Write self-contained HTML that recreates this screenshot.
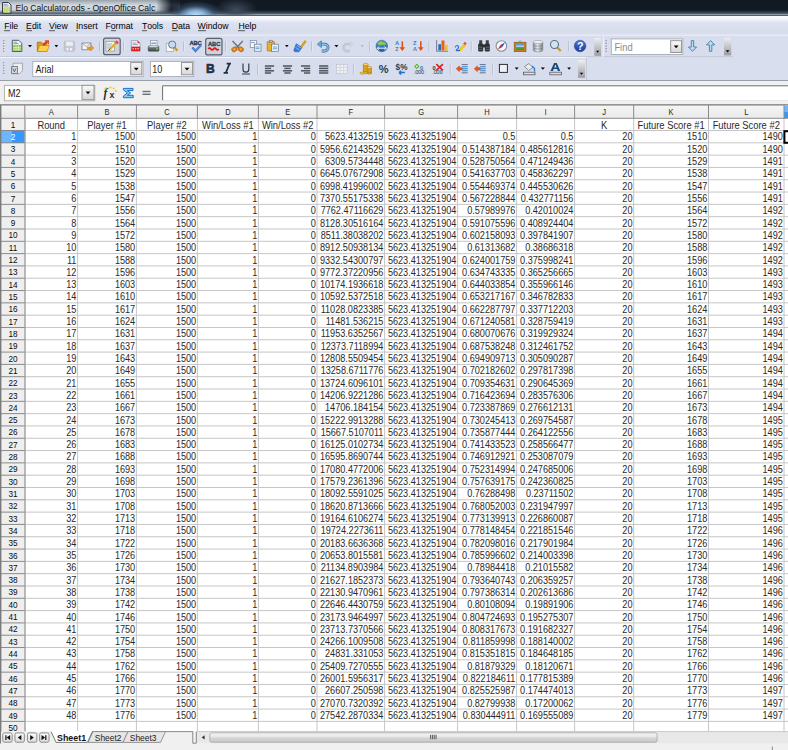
<!DOCTYPE html><html><head><meta charset="utf-8"><style>
*{box-sizing:border-box}
body{margin:0;width:788px;height:750px;overflow:hidden;position:relative;background:#f0f0f0;font-family:'Liberation Sans', sans-serif}
.a{position:absolute}
.t{position:absolute;white-space:nowrap;font-size:9.4px;line-height:12px;color:#2a2a2a;transform:scaleY(1.18);transform-origin:0 9px}
.r{text-align:right}
.c{text-align:center}
u{text-decoration:none;border-bottom:0.9px solid #666;display:inline-block;line-height:8.2px}

</style></head><body>
<div class="a" style="left:0;top:0;width:788px;height:16px;background:#111923"></div>
<div class="a" style="left:0;top:0;width:180px;height:15px;background:linear-gradient(90deg,rgba(205,213,221,1) 0,rgba(205,213,221,1) 156px,rgba(205,213,221,0.5) 163px,rgba(205,213,221,0) 171px)"></div>
<div class="a" style="left:0;top:0;width:180px;height:15px;background:linear-gradient(rgba(20,30,40,0.28),rgba(255,255,255,0.1) 35%,rgba(255,255,255,0.05) 60%,rgba(0,0,0,0.08))"></div>
<div class="a" style="left:0;top:9.5px;width:788px;height:6.5px;background:linear-gradient(rgba(18,26,36,0) 0,rgba(70,86,100,0.9) 55%,#8a98a4 75%,#3e4650 100%)"></div>
<div class="a" style="left:164px;top:0;width:64px;height:15px;background:radial-gradient(ellipse 28px 14px at 32px 15px,#bfe0fa 0,#8ab4d8 30%,rgba(70,100,130,0.55) 65%,rgba(18,26,36,0) 100%)"></div>
<div class="a" style="left:214px;top:0;width:44px;height:15px;background:radial-gradient(ellipse 22px 12px at 22px 10px,#3e4c5c 0,rgba(18,26,36,0) 100%)"></div>
<svg class="a" style="left:0;top:0" width="14" height="15"><path d="M2.5 2.5h6l2.5 2.5v8h-8.5z" fill="#e8ecef" stroke="#1e2c3a" stroke-width="0.9"/><rect x="3.6" y="7.5" width="6.4" height="5" fill="#b8d040"/><path d="M5.2 8v4.5M7 8v4.5M8.8 8v4.5" stroke="#f4f8e0" stroke-width="0.6"/><path d="M3.5 4.5h4M3.5 6h5" stroke="#7a8a9a" stroke-width="0.7"/></svg>
<div class="t" style="left:15.5px;top:1px;font-size:8.6px;line-height:14px;color:#101010;transform:scaleY(1.1);transform-origin:0 10px">Elo Calculator.ods - OpenOffice Calc</div>
<div class="a" style="left:0;top:16px;width:788px;height:19px;background:linear-gradient(#fbfcfe 0,#f4f6fb 15%,#dde2f0 36%,#d6dcec 85%,#e0e4f0 100%)"></div>
<div class="t" style="left:4.2px;top:20px;font-size:8.7px;line-height:12px;color:#000;transform:scaleY(1.1);transform-origin:0 9px"><u>F</u>ile</div>
<div class="t" style="left:26.1px;top:20px;font-size:8.7px;line-height:12px;color:#000;transform:scaleY(1.1);transform-origin:0 9px"><u>E</u>dit</div>
<div class="t" style="left:48.9px;top:20px;font-size:8.7px;line-height:12px;color:#000;transform:scaleY(1.1);transform-origin:0 9px"><u>V</u>iew</div>
<div class="t" style="left:75.9px;top:20px;font-size:8.7px;line-height:12px;color:#000;transform:scaleY(1.1);transform-origin:0 9px"><u>I</u>nsert</div>
<div class="t" style="left:105.4px;top:20px;font-size:8.7px;line-height:12px;color:#000;transform:scaleY(1.1);transform-origin:0 9px">F<u>o</u>rmat</div>
<div class="t" style="left:141.9px;top:20px;font-size:8.7px;line-height:12px;color:#000;transform:scaleY(1.1);transform-origin:0 9px"><u>T</u>ools</div>
<div class="t" style="left:171.7px;top:20px;font-size:8.7px;line-height:12px;color:#000;transform:scaleY(1.1);transform-origin:0 9px"><u>D</u>ata</div>
<div class="t" style="left:197.6px;top:20px;font-size:8.7px;line-height:12px;color:#000;transform:scaleY(1.1);transform-origin:0 9px"><u>W</u>indow</div>
<div class="t" style="left:238.4px;top:20px;font-size:8.7px;line-height:12px;color:#000;transform:scaleY(1.1);transform-origin:0 9px"><u>H</u>elp</div>
<div class="a" style="left:0;top:35px;width:788px;height:46px;background:#d8deee;border-top:1px solid #e9ebec"></div>
<div class="a" style="left:0;top:36px;width:602px;height:21px;background:#d7ddec;border-bottom:1px solid #c4cad8"></div>
<div class="a" style="left:603px;top:36px;width:130px;height:21px;background:#d7ddec;border-bottom:1px solid #c4cad8;border-left:1px solid #eef1f8"></div>
<div class="a" style="left:0;top:57px;width:587px;height:23px;background:#d7ddec;border-top:1px solid #f4f6fb;border-right:1px solid #c4cad8"></div>
<div class="a" style="left:0;top:80px;width:788px;height:1px;background:#9aa0a8"></div>
<div class="a" style="left:0;top:81px;width:788px;height:24px;background:#f0f0f0"></div>
<svg class="a" style="left:0;top:0" width="788" height="105"><defs>
<linearGradient id="chev" x1="0" y1="0" x2="0" y2="1"><stop offset="0" stop-color="#eceef2"/><stop offset="1" stop-color="#9a9ca0"/></linearGradient>
<linearGradient id="btn" x1="0" y1="0" x2="0" y2="1"><stop offset="0" stop-color="#fafafa"/><stop offset="1" stop-color="#d6d6d6"/></linearGradient>
<linearGradient id="prn" x1="0" y1="0" x2="0" y2="1"><stop offset="0" stop-color="#8a9096"/><stop offset="1" stop-color="#3e4348"/></linearGradient>
<linearGradient id="help" x1="0" y1="0" x2="0" y2="1"><stop offset="0" stop-color="#4a7ad8"/><stop offset="1" stop-color="#1a3a98"/></linearGradient>
<linearGradient id="db" x1="0" y1="0" x2="1" y2="0"><stop offset="0" stop-color="#8a8e94"/><stop offset="0.45" stop-color="#e8eaec"/><stop offset="1" stop-color="#7a7e84"/></linearGradient>
<linearGradient id="pic" x1="0" y1="0" x2="0" y2="1"><stop offset="0" stop-color="#4a90d8"/><stop offset="0.55" stop-color="#c8e0f0"/><stop offset="0.6" stop-color="#58a838"/><stop offset="1" stop-color="#3a8a28"/></linearGradient>
<linearGradient id="globe" x1="0" y1="0" x2="0" y2="1"><stop offset="0" stop-color="#58a0e0"/><stop offset="1" stop-color="#1a5aa8"/></linearGradient>
</defs><rect x="3.20" y="40.20" width="1.2" height="1.2" fill="#7a8494"/><rect x="4.20" y="41.20" width="0.8" height="0.8" fill="#fff" opacity="0.8"/><rect x="3.20" y="42.85" width="1.2" height="1.2" fill="#7a8494"/><rect x="4.20" y="43.85" width="0.8" height="0.8" fill="#fff" opacity="0.8"/><rect x="3.20" y="45.50" width="1.2" height="1.2" fill="#7a8494"/><rect x="4.20" y="46.50" width="0.8" height="0.8" fill="#fff" opacity="0.8"/><rect x="3.20" y="48.15" width="1.2" height="1.2" fill="#7a8494"/><rect x="4.20" y="49.15" width="0.8" height="0.8" fill="#fff" opacity="0.8"/><rect x="3.20" y="50.80" width="1.2" height="1.2" fill="#7a8494"/><rect x="4.20" y="51.80" width="0.8" height="0.8" fill="#fff" opacity="0.8"/><path d="M12.3 40.3h6.5l3 3v8.2h-9.5z" fill="#eef2f4" stroke="#3e4e5e" stroke-width="0.9"/><rect x="13.2" y="45" width="7.8" height="5.8" fill="#8cc43c"/><path d="M13.2 47.6h7.8M13.2 49.2h7.8M16 45v5.8M18.6 45v5.8" stroke="#eaf6d8" stroke-width="0.7"/><path d="M13.5 42.2h3.5M13.5 43.6h5" stroke="#6a8aa8" stroke-width="0.8"/><path d="M28.00 45.00L32.00 45.00L30.00 47.30Z" fill="#000"/><path d="M37.3 42.2h4l1 1.2h4.5v8h-9.5z" fill="#d89a18" stroke="#a86a08" stroke-width="0.7"/><path d="M37.5 51.5l2-6h9.8l-2.2 6z" fill="#ffd048" stroke="#c88a10" stroke-width="0.7"/><path d="M43.2 45.2l4-4" stroke="#d83818" stroke-width="2"/><path d="M44.5 40.2h4.5v4.5z" fill="#e84a20"/><path d="M54.50 45.08L58.20 45.08L56.35 47.22Z" fill="#000"/><rect x="64.2" y="41.2" width="10.4" height="10" rx="1.2" fill="#c6cad2" stroke="#b0b4bc" stroke-width="0.6"/><rect x="66" y="41.6" width="6.8" height="4.2" fill="#eceef2"/><rect x="66.5" y="48" width="2" height="2.5" fill="#eef0f2"/><rect x="70" y="48" width="2" height="2.5" fill="#eef0f2"/><rect x="82" y="43" width="9" height="6.8" fill="#f2f4f6" stroke="#7a8088" stroke-width="0.8"/><path d="M82.2 43.3l4.5 3.3 4.3-3.3" fill="none" stroke="#8a9098" stroke-width="0.7"/><path d="M87.5 47h3.2v-1.8l3.2 2.8-3.2 2.8v-1.8h-3.2z" fill="#f0a020" stroke="#c07810" stroke-width="0.5"/><line x1="99.5" x2="99.5" y1="41.5" y2="51.3" stroke="#b4bac8" stroke-width="1"/><line x1="100.3" x2="100.3" y1="41.5" y2="51.3" stroke="#f2f4fa" stroke-width="0.6"/><rect x="103.60" y="38.20" width="16.60" height="16.50" rx="2" fill="#cdd2de" stroke="#5a5f68" stroke-width="1.2"/><rect x="106" y="41.5" width="8.5" height="9.5" fill="#f6f8fa" stroke="#7a8490" stroke-width="0.6"/><path d="M107 44h5M107 46h4M107 48h5" stroke="#6aa0d8" stroke-width="0.8"/><path d="M109.5 49.5l7-7" stroke="#f0c020" stroke-width="2.6"/><path d="M109.5 49.5l7-7" stroke="#c89010" stroke-width="0.6"/><path d="M115.8 41.2l2.3 2.3" stroke="#e84060" stroke-width="2.4"/><path d="M108.4 50.8l1.5-2" stroke="#333" stroke-width="1"/><line x1="123.5" x2="123.5" y1="41.5" y2="51.3" stroke="#b4bac8" stroke-width="1"/><line x1="124.3" x2="124.3" y1="41.5" y2="51.3" stroke="#f2f4fa" stroke-width="0.6"/><path d="M131.3 40.6h6.2l2.6 2.6v7.9h-8.8z" fill="#f8f8f8" stroke="#8a9098" stroke-width="0.7"/><path d="M137.5 40.6l2.6 2.6h-2.6z" fill="#e02828"/><path d="M132.5 43h4M132.5 44.6h5.5" stroke="#5a8ac8" stroke-width="0.8"/><rect x="131.3" y="46.6" width="8.8" height="4.5" fill="#d82020"/><path d="M132.6 48.8h1.3M135 48.8h1.3M137.4 48.8h1.3" stroke="#fff" stroke-width="1"/><rect x="150.4" y="40.6" width="6.6" height="5.4" fill="#fafcfe" stroke="#8a98a8" stroke-width="0.7"/><rect x="151.3" y="42.4" width="4.8" height="1.8" fill="#7ab0e0"/><rect x="147.8" y="45.4" width="11.5" height="6.1" rx="1.5" fill="url(#prn)"/><rect x="149.5" y="46" width="8" height="1.2" fill="#d8dce0"/><rect x="156" y="48.2" width="2" height="1.4" fill="#6ad040"/><rect x="166.2" y="43.2" width="7.2" height="8.2" fill="#f8f8f8" stroke="#9aa0a8" stroke-width="0.7"/><path d="M174.4 47.2l3 3.6" stroke="#c89828" stroke-width="2.2"/><circle cx="172.2" cy="44.6" r="3.6" fill="#c4dcf0" stroke="#607080" stroke-width="0.9"/><line x1="183.6" x2="183.6" y1="41.5" y2="51.3" stroke="#b4bac8" stroke-width="1"/><line x1="184.4" x2="184.4" y1="41.5" y2="51.3" stroke="#f2f4fa" stroke-width="0.6"/><text x="189.4" y="44.8" font-family="Liberation Sans" font-weight="bold" font-size="5.8" fill="#24384a" stroke="#24384a" stroke-width="0.3" letter-spacing="-0.15">ABC</text><path d="M192.3 47.6l3.2 3.3 5.6-5.8" fill="none" stroke="#2a68c0" stroke-width="2.2"/><path d="M192.3 47.6l3.2 3.3 5.6-5.8" fill="none" stroke="#7ab8f0" stroke-width="0.8"/><rect x="205.70" y="38.30" width="16.30" height="16.60" rx="2" fill="#cdd2de" stroke="#5a5f68" stroke-width="1.2"/><text x="208" y="46.4" font-family="Liberation Sans" font-weight="bold" font-size="5.8" fill="#2a3e50" stroke="#2a3e50" stroke-width="0.3" letter-spacing="-0.1">ABC</text><path d="M208.3 49q1.3-1.8 2.6 0t2.6 0 2.6 0 2.6 0" fill="none" stroke="#e01818" stroke-width="1.9"/><line x1="225.5" x2="225.5" y1="41.5" y2="51.3" stroke="#b4bac8" stroke-width="1"/><line x1="226.3" x2="226.3" y1="41.5" y2="51.3" stroke="#f2f4fa" stroke-width="0.6"/><path d="M232.5 41l6.3 6.8M242.8 41l-6.3 6.8" stroke="#6a6e74" stroke-width="1.3"/><ellipse cx="234.4" cy="49.3" rx="2.8" ry="2.3" fill="#e08418" stroke="#a85c08" stroke-width="0.6" transform="rotate(-30 234.4 49.3)"/><ellipse cx="240.8" cy="49.3" rx="2.8" ry="2.3" fill="#e08418" stroke="#a85c08" stroke-width="0.6" transform="rotate(30 240.8 49.3)"/><circle cx="234.4" cy="49.3" r="0.8" fill="#f4c890"/><circle cx="240.8" cy="49.3" r="0.8" fill="#f4c890"/><rect x="250.2" y="40.4" width="6.4" height="7" fill="#f4f6f8" stroke="#7a8898" stroke-width="0.7"/><rect x="254.4" y="44.2" width="6.6" height="7" fill="#eef4fa" stroke="#6a7888" stroke-width="0.7"/><path d="M251.2 42.6h3.5M255.5 47h4M255.5 48.6h4" stroke="#4a8ad0" stroke-width="0.8"/><rect x="267.2" y="41.6" width="7.4" height="9.4" rx="0.8" fill="#e8b030" stroke="#a87410" stroke-width="0.7"/><rect x="269.3" y="40.2" width="3.2" height="2.2" fill="#b8bcc2" stroke="#6a6e74" stroke-width="0.5"/><rect x="271.6" y="44.2" width="7" height="7.1" fill="#eef4fa" stroke="#6a7888" stroke-width="0.7"/><path d="M272.8 47h4.5M272.8 48.8h4.5" stroke="#4a8ad0" stroke-width="0.8"/><path d="M285.00 45.10L288.60 45.10L286.80 47.20Z" fill="#000"/><path d="M301.5 46.5l4.3-5.8" stroke="#d8a020" stroke-width="2.4"/><path d="M296.2 43.8l5.8 3.6-3 4.4h-4.2l-1-1.6z" fill="#3a7ad8" stroke="#2a5aa8" stroke-width="0.6"/><path d="M295.5 47.5l4 2.3M297 45.5l4 2.3" stroke="#a8d0f8" stroke-width="0.7"/><line x1="311.6" x2="311.6" y1="41.5" y2="51.3" stroke="#b4bac8" stroke-width="1"/><line x1="312.4" x2="312.4" y1="41.5" y2="51.3" stroke="#f2f4fa" stroke-width="0.6"/><path d="M320.5 44.2h4.2a3.4 3.4 0 0 1 0 6.8h-3" fill="none" stroke="#3a6a98" stroke-width="2.8"/><path d="M320.5 44.2h4.2a3.4 3.4 0 0 1 0 6.8h-3" fill="none" stroke="#8ac0ec" stroke-width="1.4"/><path d="M317.2 44.2l4.2-3.4v6.8z" fill="#6aa8e0" stroke="#3a6a98" stroke-width="0.6"/><path d="M334.40 45.00L338.40 45.00L336.40 47.30Z" fill="#000"/><path d="M351 44.2h-4.2a3.4 3.4 0 0 0 0 6.8h3" fill="none" stroke="#c4c8d0" stroke-width="2.8"/><path d="M354.3 44.2l-4.2-3.4v6.8z" fill="#d0d4da"/><path d="M360.60 45.20L363.80 45.20L362.20 47.10Z" fill="#a8acb4"/><line x1="369.5" x2="369.5" y1="41.5" y2="51.3" stroke="#b4bac8" stroke-width="1"/><line x1="370.3" x2="370.3" y1="41.5" y2="51.3" stroke="#f2f4fa" stroke-width="0.6"/><circle cx="381.8" cy="46" r="5.8" fill="url(#globe)" stroke="#2a5a8a" stroke-width="0.5"/><path d="M377.5 43.5q2-2.5 4.5-1.5t3.5 1l-0.5 2-3-0.5-2 1z" fill="#9ad028"/><path d="M377.3 48.2h9M377.3 48.2l1.8-1.5M377.3 48.2l1.8 1.5M386.3 48.2l-1.8-1.5M386.3 48.2l-1.8 1.5" stroke="#f0f4f8" stroke-width="1"/><text x="395" y="45.4" font-family="Liberation Sans" font-weight="bold" font-size="5.8" fill="#2a80d8">A</text><text x="395.3" y="51.2" font-family="Liberation Sans" font-weight="bold" font-size="5.6" fill="#707478">Z</text><path d="M402.3 41.3v6.8" stroke="#e05018" stroke-width="1.6"/><path d="M399.5 47.2h5.6l-2.8 3.8z" fill="#e05018"/><text x="413" y="45.4" font-family="Liberation Sans" font-weight="bold" font-size="5.8" fill="#2a80d8">Z</text><text x="413" y="51.2" font-family="Liberation Sans" font-weight="bold" font-size="5.6" fill="#707478">A</text><path d="M420.8 41.3v6.8" stroke="#e05018" stroke-width="1.6"/><path d="M418 47.2h5.6l-2.8 3.8z" fill="#e05018"/><line x1="429.0" x2="429.0" y1="41.5" y2="51.3" stroke="#b4bac8" stroke-width="1"/><line x1="429.8" x2="429.8" y1="41.5" y2="51.3" stroke="#f2f4fa" stroke-width="0.6"/><path d="M436.6 40.2v11h11.4" fill="none" stroke="#6a7078" stroke-width="0.9"/><rect x="438.3" y="44.2" width="2.8" height="6.2" fill="#2a70b8"/><rect x="441.5" y="40.5" width="3" height="9.9" fill="#f06010"/><rect x="444.8" y="45" width="2.8" height="5.4" fill="#f0c020"/><path d="M455 47.5q1.5-3 3-1.5t-1 3.5 3.5 0.5" fill="none" stroke="#2a70d0" stroke-width="1.1"/><path d="M459.5 50.5l5.5-6" stroke="#f0c820" stroke-width="2.8"/><path d="M464.2 44.4l1.6-1.8" stroke="#e84a68" stroke-width="2.6"/><path d="M458.8 51.3l1-1.4" stroke="#444" stroke-width="1"/><line x1="471.3" x2="471.3" y1="41.5" y2="51.3" stroke="#b4bac8" stroke-width="1"/><line x1="472.1" x2="472.1" y1="41.5" y2="51.3" stroke="#f2f4fa" stroke-width="0.6"/><rect x="478.2" y="43.5" width="5" height="8" rx="1.2" fill="#2a2e33"/><rect x="484.8" y="43.5" width="5" height="8" rx="1.2" fill="#2a2e33"/><rect x="479.2" y="40.3" width="3" height="4" fill="#3a3e43"/><rect x="485.8" y="40.3" width="3" height="4" fill="#3a3e43"/><rect x="482.8" y="44.5" width="2.4" height="3" fill="#2a2e33"/><path d="M479 47.2h3.5M479 49.4h3.5M485.6 47.2h3.5M485.6 49.4h3.5" stroke="#8a9096" stroke-width="0.6"/><circle cx="501.4" cy="46" r="5.3" fill="#f8f8f8" stroke="#8a9098" stroke-width="1.1"/><path d="M505 42.4l-2.6 4.6-2-2z" fill="#2050d0"/><path d="M497.8 49.6l2.6-4.6 2 2z" fill="#e02020"/><path d="M518.5 42.2l1.6-1.8 1.6 1.8" fill="none" stroke="#8a8e94" stroke-width="0.7"/><rect x="514.2" y="42.2" width="11.8" height="9.5" fill="#c07e28" stroke="#8a5410" stroke-width="0.6"/><rect x="516.2" y="44" width="7.8" height="5.8" fill="url(#pic)"/><path d="M533.2 42v8.3a4.8 1.6 0 0 0 9.6 0V42z" fill="url(#db)" stroke="#7a7e84" stroke-width="0.5"/><ellipse cx="538" cy="42" rx="4.8" ry="1.6" fill="#eceef0" stroke="#8a8e94" stroke-width="0.5"/><path d="M533.3 45a4.8 1.4 0 0 0 9.5 0M533.3 47.8a4.8 1.4 0 0 0 9.5 0" fill="none" stroke="#6a6e74" stroke-width="0.5"/><path d="M557.2 47.4l3.5 3.6" stroke="#c89828" stroke-width="2.2"/><circle cx="554.5" cy="44.5" r="4" fill="#cfe4f4" stroke="#607080" stroke-width="1.1"/><line x1="568.5" x2="568.5" y1="41.5" y2="51.3" stroke="#b4bac8" stroke-width="1"/><line x1="569.3" x2="569.3" y1="41.5" y2="51.3" stroke="#f2f4fa" stroke-width="0.6"/><circle cx="580.1" cy="46" r="5.8" fill="url(#help)" stroke="#18348a" stroke-width="0.5"/><text x="580.2" y="50.2" text-anchor="middle" font-family="Liberation Sans" font-weight="bold" font-size="10.6" fill="#fff">?</text><rect x="594.30" y="38.00" width="6.70" height="17.80" fill="url(#chev)"/><path d="M596.10 50.82L599.20 50.82L597.65 52.68Z" fill="#000"/><rect x="605.60" y="40.20" width="1.2" height="1.2" fill="#7a8494"/><rect x="606.60" y="41.20" width="0.8" height="0.8" fill="#fff" opacity="0.8"/><rect x="605.60" y="42.85" width="1.2" height="1.2" fill="#7a8494"/><rect x="606.60" y="43.85" width="0.8" height="0.8" fill="#fff" opacity="0.8"/><rect x="605.60" y="45.50" width="1.2" height="1.2" fill="#7a8494"/><rect x="606.60" y="46.50" width="0.8" height="0.8" fill="#fff" opacity="0.8"/><rect x="605.60" y="48.15" width="1.2" height="1.2" fill="#7a8494"/><rect x="606.60" y="49.15" width="0.8" height="0.8" fill="#fff" opacity="0.8"/><rect x="605.60" y="50.80" width="1.2" height="1.2" fill="#7a8494"/><rect x="606.60" y="51.80" width="0.8" height="0.8" fill="#fff" opacity="0.8"/><rect x="611.3" y="38.9" width="71.5" height="15.6" fill="#fff" stroke="#a6acb6" stroke-width="0.9"/><rect x="670.70" y="40.70" width="10.90" height="11.80" fill="url(#btn)" stroke="#8c8c8c" stroke-width="0.9"/><path d="M673.75 45.60L678.55 45.60L676.15 48.30Z" fill="#000"/><path d="M691.3 40.6h2.4v6.4h2.9l-4.1 4.3-4.1-4.3h2.9z" fill="#b8dcf4" stroke="#4a7aa8" stroke-width="0.9" stroke-linejoin="round"/><path d="M709.4 51.3h2.4v-6.4h2.9l-4.1-4.3-4.1 4.3h2.9z" fill="#b8dcf4" stroke="#4a7aa8" stroke-width="0.9" stroke-linejoin="round"/><rect x="724.00" y="37.80" width="7.20" height="17.60" fill="url(#chev)"/><path d="M725.80 50.30L729.40 50.30L727.60 52.40Z" fill="#000"/><rect x="3.20" y="62.20" width="1.2" height="1.2" fill="#7a8494"/><rect x="4.20" y="63.20" width="0.8" height="0.8" fill="#fff" opacity="0.8"/><rect x="3.20" y="64.85" width="1.2" height="1.2" fill="#7a8494"/><rect x="4.20" y="65.85" width="0.8" height="0.8" fill="#fff" opacity="0.8"/><rect x="3.20" y="67.50" width="1.2" height="1.2" fill="#7a8494"/><rect x="4.20" y="68.50" width="0.8" height="0.8" fill="#fff" opacity="0.8"/><rect x="3.20" y="70.15" width="1.2" height="1.2" fill="#7a8494"/><rect x="4.20" y="71.15" width="0.8" height="0.8" fill="#fff" opacity="0.8"/><rect x="3.20" y="72.80" width="1.2" height="1.2" fill="#7a8494"/><rect x="4.20" y="73.80" width="0.8" height="0.8" fill="#fff" opacity="0.8"/><path d="M13 63.2h9.5v7.5l-3 3h-6.5z" fill="#eceef0" stroke="#8a9098" stroke-width="0.7"/><rect x="11.6" y="66.6" width="6" height="6.8" fill="#d4d8de" stroke="#6a7078" stroke-width="0.8"/><path d="M12.8 68.4l1.6 3.4 1.6-3.4" fill="none" stroke="#4a5058" stroke-width="0.8"/><rect x="32.8" y="61.4" width="110.3" height="15.2" fill="#fff" stroke="#a6acb6" stroke-width="0.9"/><rect x="130.70" y="62.60" width="11.10" height="12.20" fill="url(#btn)" stroke="#8c8c8c" stroke-width="0.9"/><path d="M133.85 67.70L138.65 67.70L136.25 70.40Z" fill="#000"/><rect x="150.4" y="61.4" width="43.4" height="15.2" fill="#fff" stroke="#a6acb6" stroke-width="0.9"/><rect x="181.40" y="62.60" width="11.20" height="12.20" fill="url(#btn)" stroke="#8c8c8c" stroke-width="0.9"/><path d="M184.60 67.70L189.40 67.70L187.00 70.40Z" fill="#000"/><text x="205.9" y="72.9" font-family="Liberation Sans" font-weight="bold" font-size="12" fill="#1e3244" stroke="#1e3244" stroke-width="0.6">B</text><path d="M226.6 63.6h4.4M223.6 72.9h4.4M229.6 63.6l-3.8 9.3" stroke="#1e3244" stroke-width="1.7" fill="none"/><path d="M243 63.6v5.6a2.9 2.9 0 0 0 5.8 0v-5.6" fill="none" stroke="#2a3e50" stroke-width="1.2"/><path d="M242 74h8" stroke="#2a3e50" stroke-width="1"/><line x1="257.6" x2="257.6" y1="63.5" y2="74.5" stroke="#b4bac8" stroke-width="1"/><line x1="258.4" x2="258.4" y1="63.5" y2="74.5" stroke="#f2f4fa" stroke-width="0.6"/><rect x="264.90" y="65.25" width="9.20" height="1.5" fill="#4e545c"/><rect x="264.90" y="67.65" width="6.20" height="1.5" fill="#4e545c"/><rect x="264.90" y="70.05" width="9.20" height="1.5" fill="#4e545c"/><rect x="264.90" y="72.25" width="6.20" height="1.5" fill="#4e545c"/><rect x="282.90" y="65.25" width="9.20" height="1.5" fill="#4e545c"/><rect x="284.40" y="67.65" width="6.20" height="1.5" fill="#4e545c"/><rect x="282.90" y="70.05" width="9.20" height="1.5" fill="#4e545c"/><rect x="284.40" y="72.25" width="6.20" height="1.5" fill="#4e545c"/><rect x="301.00" y="65.25" width="9.20" height="1.5" fill="#4e545c"/><rect x="304.00" y="67.65" width="6.20" height="1.5" fill="#4e545c"/><rect x="301.00" y="70.05" width="9.20" height="1.5" fill="#4e545c"/><rect x="304.00" y="72.25" width="6.20" height="1.5" fill="#4e545c"/><rect x="319.10" y="65.25" width="9.20" height="1.5" fill="#4e545c"/><rect x="319.10" y="67.65" width="9.20" height="1.5" fill="#4e545c"/><rect x="319.10" y="70.05" width="9.20" height="1.5" fill="#4e545c"/><rect x="319.10" y="72.25" width="9.20" height="1.5" fill="#4e545c"/><rect x="336.5" y="64.5" width="10.8" height="9" fill="#eef0f4" stroke="#c0c4cc" stroke-width="0.7"/><path d="M336.5 67.5h10.8M336.5 70.5h10.8M340.1 64.5v9M343.7 64.5v9" stroke="#c8ccd4" stroke-width="0.6"/><line x1="353.4" x2="353.4" y1="63.5" y2="74.5" stroke="#b4bac8" stroke-width="1"/><line x1="354.2" x2="354.2" y1="63.5" y2="74.5" stroke="#f2f4fa" stroke-width="0.6"/><rect x="363.20" y="64.40" width="4.80" height="8.20" fill="#e8b028" stroke="#a87410" stroke-width="0.5"/><ellipse cx="365.60" cy="72.60" rx="2.40" ry="1.10" fill="#e8b028" stroke="#a87410" stroke-width="0.5"/><path d="M363.20 66.00q2.40 1.76 4.80 0" fill="none" stroke="#b07c14" stroke-width="0.5"/><path d="M363.20 67.60q2.40 1.76 4.80 0" fill="none" stroke="#b07c14" stroke-width="0.5"/><path d="M363.20 69.20q2.40 1.76 4.80 0" fill="none" stroke="#b07c14" stroke-width="0.5"/><path d="M363.20 70.80q2.40 1.76 4.80 0" fill="none" stroke="#b07c14" stroke-width="0.5"/><ellipse cx="365.60" cy="64.40" rx="2.40" ry="1.10" fill="#f8dc70" stroke="#a87410" stroke-width="0.5"/><rect x="367.20" y="67.40" width="4.40" height="5.80" fill="#e8b028" stroke="#a87410" stroke-width="0.5"/><ellipse cx="369.40" cy="73.20" rx="2.20" ry="1.00" fill="#e8b028" stroke="#a87410" stroke-width="0.5"/><path d="M367.20 69.00q2.20 1.60 4.40 0" fill="none" stroke="#b07c14" stroke-width="0.5"/><path d="M367.20 70.60q2.20 1.60 4.40 0" fill="none" stroke="#b07c14" stroke-width="0.5"/><path d="M367.20 72.20q2.20 1.60 4.40 0" fill="none" stroke="#b07c14" stroke-width="0.5"/><ellipse cx="369.40" cy="67.40" rx="2.20" ry="1.00" fill="#f8dc70" stroke="#a87410" stroke-width="0.5"/><ellipse cx="362.4" cy="73.2" rx="2.4" ry="1.1" fill="#f0c848" stroke="#a87410" stroke-width="0.5"/><text x="378.8" y="73.2" font-family="Liberation Sans" font-weight="bold" font-size="11" fill="#2a3a4a">%</text><text x="395.6" y="70.4" font-family="Liberation Sans" font-weight="bold" font-size="8.2" fill="#2a3a4a" letter-spacing="0.2">$%</text><path d="M399 72.6h6M399 72.6l2.2-1.8M399 72.6l2.2 1.8" stroke="#2a70c8" stroke-width="1.5" fill="none"/><path d="M416.8 63.8l2.6 2.6-2.6 2.6-2.6-2.6z" fill="#3aa818"/><path d="M416.8 65.1v2.6M415.5 66.4h2.6" stroke="#fff" stroke-width="0.7"/><text x="420" y="69.6" font-family="Liberation Sans" font-weight="bold" font-size="5.6" fill="#2a70d0">0</text><text x="413.8" y="74" font-family="Liberation Sans" font-size="5.6" fill="#2a3a4a" letter-spacing="-0.2">.000</text><text x="432.5" y="69.6" font-family="Liberation Sans" font-weight="bold" font-size="5.6" fill="#2a3a4a">0</text><text x="432.3" y="74" font-family="Liberation Sans" font-size="5.6" fill="#2a3a4a" letter-spacing="-0.2">.00</text><text x="439.6" y="74" font-family="Liberation Sans" font-weight="bold" font-size="5.6" fill="#2a70d0">0</text><path d="M436.3 64.2l6.6 6.2M442.9 64.2l-6.6 6.2" stroke="#e02020" stroke-width="1.6"/><line x1="450.3" x2="450.3" y1="63.5" y2="74.5" stroke="#b4bac8" stroke-width="1"/><line x1="451.1" x2="451.1" y1="63.5" y2="74.5" stroke="#f2f4fa" stroke-width="0.6"/><path d="M461.70 64.6h6M461.70 72.8h6" stroke="#4e545c" stroke-width="0.8"/><path d="M462.20 66.8h5.5M462.20 68.8h5.5M462.20 70.8h5.5" stroke="#2a80d8" stroke-width="1.1"/><path d="M456.20 68.8l3.2-3v1.8h2.8v2.4h-2.8v1.8z" fill="#e8581c" stroke="#b84010" stroke-width="0.4"/><path d="M479.70 64.6h6M479.70 72.8h6" stroke="#4e545c" stroke-width="0.8"/><path d="M480.20 66.8h5.5M480.20 68.8h5.5M480.20 70.8h5.5" stroke="#2a80d8" stroke-width="1.1"/><path d="M474.20 68.8l3.2-3v1.8h2.8v2.4h-2.8v1.8z" fill="#e8581c" stroke="#b84010" stroke-width="0.4"/><line x1="492.6" x2="492.6" y1="63.5" y2="74.5" stroke="#b4bac8" stroke-width="1"/><line x1="493.4" x2="493.4" y1="63.5" y2="74.5" stroke="#f2f4fa" stroke-width="0.6"/><rect x="499.4" y="64.4" width="8" height="8" fill="#eef0f4" stroke="#2a2e34" stroke-width="1"/><path d="M514.80 67.45L518.60 67.45L516.70 69.65Z" fill="#000"/><path d="M524.5 66.5l4.5-3 4 4-4.5 3z" fill="#e8eaec" stroke="#6a6e74" stroke-width="0.7"/><path d="M532 66l2.5 2.5v3" fill="none" stroke="#2a80d8" stroke-width="1.4"/><rect x="523.4" y="72.2" width="11.6" height="2.6" fill="#dcdcdc" stroke="#5a5e64" stroke-width="0.8"/><path d="M540.80 67.38L544.90 67.38L542.85 69.73Z" fill="#000"/><path d="M550.5 71l3.6-8h2.6l3.6 8h-2.4l-0.8-2h-3.4l-0.8 2z" fill="#1a4a78"/><path d="M554.2 67.4h2.4l-1.2-2.8z" fill="#dde2f0"/><rect x="549.8" y="72.2" width="11.6" height="2.6" fill="#dcdcdc" stroke="#5a5e64" stroke-width="0.8"/><path d="M567.20 67.45L571.00 67.45L569.10 69.65Z" fill="#000"/><rect x="577.90" y="60.00" width="7.10" height="17.80" fill="url(#chev)"/><path d="M579.70 72.72L583.20 72.72L581.45 74.78Z" fill="#000"/><rect x="4.4" y="85.4" width="90.4" height="15.4" fill="#fff" stroke="#acacac" stroke-width="0.9"/><rect x="82.00" y="85.30" width="12.00" height="14.40" fill="url(#btn)" stroke="#8c8c8c" stroke-width="0.9"/><path d="M85.60 91.50L90.40 91.50L88.00 94.20Z" fill="#000"/><text x="103.6" y="97" font-family="Liberation Serif" font-style="italic" font-weight="bold" font-size="11.5" fill="#24323e">f</text><text x="109.4" y="98.2" font-family="Liberation Sans" font-weight="bold" font-size="8.8" fill="#24323e">x</text><circle cx="105.6" cy="88.6" r="1.1" fill="#f4c020"/><circle cx="110.4" cy="87.4" r="1" fill="#f4c020"/><circle cx="113.6" cy="88.4" r="0.9" fill="#f4c020"/><circle cx="115.8" cy="91" r="0.9" fill="#f4c020"/><circle cx="107.8" cy="87.6" r="0.7" fill="#f8d860"/><path d="M123.4 88.4h9.6v2.2h-5.6l3.2 2.3-3.2 2.4h5.8v2.4h-9.8v-1.6l4-3.2-4-3z" fill="#8ccaf0" stroke="#1a70c8" stroke-width="1"/><rect x="142.5" y="90.8" width="8" height="1.4" fill="#6a6e74"/><rect x="142.5" y="93.6" width="8" height="1.4" fill="#6a6e74"/><rect x="162.2" y="85.4" width="640" height="15" fill="#fff"/><path d="M162.6 100.4V85.8H800" fill="none" stroke="#6c6c6c" stroke-width="1"/><path d="M162.6 100.6H800" stroke="#e6e6e6" stroke-width="0.9"/></svg>
<div class="t" style="left:35.4px;top:64.1px;font-size:9px;color:#1a1a1a;transform:scaleY(1.12)">Arial</div>
<div class="t" style="left:152.3px;top:64.1px;font-size:9px;color:#1a1a1a;transform:scaleY(1.12)">10</div>
<div class="t" style="left:614.4px;top:42.2px;font-size:9.4px;color:#8a8a8a">Find</div>
<div class="t" style="left:8px;top:88.2px;font-size:9px;color:#1a1a1a;transform:scaleY(1.12)">M2</div>
<div class="a" style="left:0;top:104.5px;width:788px;height:627px;background:#fff"></div>
<div class="a" style="left:1px;top:105px;width:788px;height:13px;background:linear-gradient(#f6f6f6,#e9e9e9)"></div>
<div class="a" style="left:1px;top:118px;width:24px;height:614px;background:#efefef"></div>
<div class="a" style="left:1.2px;top:130.3px;width:23.6px;height:12.6px;background:linear-gradient(90deg,#6cb5ff 0,#6cb5ff 11px,#3399ff 11.5px)"></div>
<div class="a" style="left:784px;top:105.5px;width:10px;height:12.8px;background:linear-gradient(#70b8ff 0,#70b8ff 6px,#3399ff 6.5px)"></div>
<svg class="a" style="left:0;top:0" width="788" height="750"><line x1="25" x2="788" y1="130.51" y2="130.51" stroke="#c6c6c6" stroke-width="1"/><line x1="25" x2="788" y1="142.82" y2="142.82" stroke="#c6c6c6" stroke-width="1"/><line x1="25" x2="788" y1="155.13" y2="155.13" stroke="#c6c6c6" stroke-width="1"/><line x1="25" x2="788" y1="167.44" y2="167.44" stroke="#c6c6c6" stroke-width="1"/><line x1="25" x2="788" y1="179.75" y2="179.75" stroke="#c6c6c6" stroke-width="1"/><line x1="25" x2="788" y1="192.06" y2="192.06" stroke="#c6c6c6" stroke-width="1"/><line x1="25" x2="788" y1="204.37" y2="204.37" stroke="#c6c6c6" stroke-width="1"/><line x1="25" x2="788" y1="216.68" y2="216.68" stroke="#c6c6c6" stroke-width="1"/><line x1="25" x2="788" y1="228.99" y2="228.99" stroke="#c6c6c6" stroke-width="1"/><line x1="25" x2="788" y1="241.30" y2="241.30" stroke="#c6c6c6" stroke-width="1"/><line x1="25" x2="788" y1="253.61" y2="253.61" stroke="#c6c6c6" stroke-width="1"/><line x1="25" x2="788" y1="265.92" y2="265.92" stroke="#c6c6c6" stroke-width="1"/><line x1="25" x2="788" y1="278.23" y2="278.23" stroke="#c6c6c6" stroke-width="1"/><line x1="25" x2="788" y1="290.54" y2="290.54" stroke="#c6c6c6" stroke-width="1"/><line x1="25" x2="788" y1="302.85" y2="302.85" stroke="#c6c6c6" stroke-width="1"/><line x1="25" x2="788" y1="315.16" y2="315.16" stroke="#c6c6c6" stroke-width="1"/><line x1="25" x2="788" y1="327.47" y2="327.47" stroke="#c6c6c6" stroke-width="1"/><line x1="25" x2="788" y1="339.78" y2="339.78" stroke="#c6c6c6" stroke-width="1"/><line x1="25" x2="788" y1="352.09" y2="352.09" stroke="#c6c6c6" stroke-width="1"/><line x1="25" x2="788" y1="364.40" y2="364.40" stroke="#c6c6c6" stroke-width="1"/><line x1="25" x2="788" y1="376.71" y2="376.71" stroke="#c6c6c6" stroke-width="1"/><line x1="25" x2="788" y1="389.02" y2="389.02" stroke="#c6c6c6" stroke-width="1"/><line x1="25" x2="788" y1="401.33" y2="401.33" stroke="#c6c6c6" stroke-width="1"/><line x1="25" x2="788" y1="413.64" y2="413.64" stroke="#c6c6c6" stroke-width="1"/><line x1="25" x2="788" y1="425.95" y2="425.95" stroke="#c6c6c6" stroke-width="1"/><line x1="25" x2="788" y1="438.26" y2="438.26" stroke="#c6c6c6" stroke-width="1"/><line x1="25" x2="788" y1="450.57" y2="450.57" stroke="#c6c6c6" stroke-width="1"/><line x1="25" x2="788" y1="462.88" y2="462.88" stroke="#c6c6c6" stroke-width="1"/><line x1="25" x2="788" y1="475.19" y2="475.19" stroke="#c6c6c6" stroke-width="1"/><line x1="25" x2="788" y1="487.50" y2="487.50" stroke="#c6c6c6" stroke-width="1"/><line x1="25" x2="788" y1="499.81" y2="499.81" stroke="#c6c6c6" stroke-width="1"/><line x1="25" x2="788" y1="512.12" y2="512.12" stroke="#c6c6c6" stroke-width="1"/><line x1="25" x2="788" y1="524.43" y2="524.43" stroke="#c6c6c6" stroke-width="1"/><line x1="25" x2="788" y1="536.74" y2="536.74" stroke="#c6c6c6" stroke-width="1"/><line x1="25" x2="788" y1="549.05" y2="549.05" stroke="#c6c6c6" stroke-width="1"/><line x1="25" x2="788" y1="561.36" y2="561.36" stroke="#c6c6c6" stroke-width="1"/><line x1="25" x2="788" y1="573.67" y2="573.67" stroke="#c6c6c6" stroke-width="1"/><line x1="25" x2="788" y1="585.98" y2="585.98" stroke="#c6c6c6" stroke-width="1"/><line x1="25" x2="788" y1="598.29" y2="598.29" stroke="#c6c6c6" stroke-width="1"/><line x1="25" x2="788" y1="610.60" y2="610.60" stroke="#c6c6c6" stroke-width="1"/><line x1="25" x2="788" y1="622.91" y2="622.91" stroke="#c6c6c6" stroke-width="1"/><line x1="25" x2="788" y1="635.22" y2="635.22" stroke="#c6c6c6" stroke-width="1"/><line x1="25" x2="788" y1="647.53" y2="647.53" stroke="#c6c6c6" stroke-width="1"/><line x1="25" x2="788" y1="659.84" y2="659.84" stroke="#c6c6c6" stroke-width="1"/><line x1="25" x2="788" y1="672.15" y2="672.15" stroke="#c6c6c6" stroke-width="1"/><line x1="25" x2="788" y1="684.46" y2="684.46" stroke="#c6c6c6" stroke-width="1"/><line x1="25" x2="788" y1="696.77" y2="696.77" stroke="#c6c6c6" stroke-width="1"/><line x1="25" x2="788" y1="709.08" y2="709.08" stroke="#c6c6c6" stroke-width="1"/><line x1="25" x2="788" y1="721.39" y2="721.39" stroke="#c6c6c6" stroke-width="1"/><line x1="25" x2="788" y1="733.70" y2="733.70" stroke="#c6c6c6" stroke-width="1"/><line x1="77.60" x2="77.60" y1="118" y2="731" stroke="#c6c6c6" stroke-width="1"/><line x1="136.40" x2="136.40" y1="118" y2="731" stroke="#c6c6c6" stroke-width="1"/><line x1="197.40" x2="197.40" y1="118" y2="731" stroke="#c6c6c6" stroke-width="1"/><line x1="258.40" x2="258.40" y1="118" y2="731" stroke="#c6c6c6" stroke-width="1"/><line x1="317.00" x2="317.00" y1="118" y2="731" stroke="#c6c6c6" stroke-width="1"/><line x1="384.60" x2="384.60" y1="118" y2="731" stroke="#c6c6c6" stroke-width="1"/><line x1="457.60" x2="457.60" y1="118" y2="731" stroke="#c6c6c6" stroke-width="1"/><line x1="516.60" x2="516.60" y1="118" y2="731" stroke="#c6c6c6" stroke-width="1"/><line x1="574.60" x2="574.60" y1="118" y2="731" stroke="#c6c6c6" stroke-width="1"/><line x1="633.70" x2="633.70" y1="118" y2="731" stroke="#c6c6c6" stroke-width="1"/><line x1="708.50" x2="708.50" y1="118" y2="731" stroke="#c6c6c6" stroke-width="1"/><line x1="784.00" x2="784.00" y1="118" y2="731" stroke="#c6c6c6" stroke-width="1"/><line x1="0" x2="788" y1="104.9" y2="104.9" stroke="#767676" stroke-width="1.1"/><line x1="0" x2="788" y1="118.3" y2="118.3" stroke="#8a8a8a"/><line x1="24.80" x2="24.80" y1="105" y2="118.3" stroke="#8a8a8a"/><line x1="77.60" x2="77.60" y1="105" y2="118.3" stroke="#8a8a8a"/><line x1="136.40" x2="136.40" y1="105" y2="118.3" stroke="#8a8a8a"/><line x1="197.40" x2="197.40" y1="105" y2="118.3" stroke="#8a8a8a"/><line x1="258.40" x2="258.40" y1="105" y2="118.3" stroke="#8a8a8a"/><line x1="317.00" x2="317.00" y1="105" y2="118.3" stroke="#8a8a8a"/><line x1="384.60" x2="384.60" y1="105" y2="118.3" stroke="#8a8a8a"/><line x1="457.60" x2="457.60" y1="105" y2="118.3" stroke="#8a8a8a"/><line x1="516.60" x2="516.60" y1="105" y2="118.3" stroke="#8a8a8a"/><line x1="574.60" x2="574.60" y1="105" y2="118.3" stroke="#8a8a8a"/><line x1="633.70" x2="633.70" y1="105" y2="118.3" stroke="#8a8a8a"/><line x1="708.50" x2="708.50" y1="105" y2="118.3" stroke="#8a8a8a"/><line x1="784.00" x2="784.00" y1="105" y2="118.3" stroke="#8a8a8a"/><line x1="25.0" x2="25.0" y1="118" y2="731.5" stroke="#a4a4a4" stroke-width="1.5"/><line x1="0" x2="24.8" y1="130.51" y2="130.51" stroke="#8a8a8a"/><line x1="0" x2="24.8" y1="142.82" y2="142.82" stroke="#8a8a8a"/><line x1="0" x2="24.8" y1="155.13" y2="155.13" stroke="#8a8a8a"/><line x1="0" x2="24.8" y1="167.44" y2="167.44" stroke="#8a8a8a"/><line x1="0" x2="24.8" y1="179.75" y2="179.75" stroke="#8a8a8a"/><line x1="0" x2="24.8" y1="192.06" y2="192.06" stroke="#8a8a8a"/><line x1="0" x2="24.8" y1="204.37" y2="204.37" stroke="#8a8a8a"/><line x1="0" x2="24.8" y1="216.68" y2="216.68" stroke="#8a8a8a"/><line x1="0" x2="24.8" y1="228.99" y2="228.99" stroke="#8a8a8a"/><line x1="0" x2="24.8" y1="241.30" y2="241.30" stroke="#8a8a8a"/><line x1="0" x2="24.8" y1="253.61" y2="253.61" stroke="#8a8a8a"/><line x1="0" x2="24.8" y1="265.92" y2="265.92" stroke="#8a8a8a"/><line x1="0" x2="24.8" y1="278.23" y2="278.23" stroke="#8a8a8a"/><line x1="0" x2="24.8" y1="290.54" y2="290.54" stroke="#8a8a8a"/><line x1="0" x2="24.8" y1="302.85" y2="302.85" stroke="#8a8a8a"/><line x1="0" x2="24.8" y1="315.16" y2="315.16" stroke="#8a8a8a"/><line x1="0" x2="24.8" y1="327.47" y2="327.47" stroke="#8a8a8a"/><line x1="0" x2="24.8" y1="339.78" y2="339.78" stroke="#8a8a8a"/><line x1="0" x2="24.8" y1="352.09" y2="352.09" stroke="#8a8a8a"/><line x1="0" x2="24.8" y1="364.40" y2="364.40" stroke="#8a8a8a"/><line x1="0" x2="24.8" y1="376.71" y2="376.71" stroke="#8a8a8a"/><line x1="0" x2="24.8" y1="389.02" y2="389.02" stroke="#8a8a8a"/><line x1="0" x2="24.8" y1="401.33" y2="401.33" stroke="#8a8a8a"/><line x1="0" x2="24.8" y1="413.64" y2="413.64" stroke="#8a8a8a"/><line x1="0" x2="24.8" y1="425.95" y2="425.95" stroke="#8a8a8a"/><line x1="0" x2="24.8" y1="438.26" y2="438.26" stroke="#8a8a8a"/><line x1="0" x2="24.8" y1="450.57" y2="450.57" stroke="#8a8a8a"/><line x1="0" x2="24.8" y1="462.88" y2="462.88" stroke="#8a8a8a"/><line x1="0" x2="24.8" y1="475.19" y2="475.19" stroke="#8a8a8a"/><line x1="0" x2="24.8" y1="487.50" y2="487.50" stroke="#8a8a8a"/><line x1="0" x2="24.8" y1="499.81" y2="499.81" stroke="#8a8a8a"/><line x1="0" x2="24.8" y1="512.12" y2="512.12" stroke="#8a8a8a"/><line x1="0" x2="24.8" y1="524.43" y2="524.43" stroke="#8a8a8a"/><line x1="0" x2="24.8" y1="536.74" y2="536.74" stroke="#8a8a8a"/><line x1="0" x2="24.8" y1="549.05" y2="549.05" stroke="#8a8a8a"/><line x1="0" x2="24.8" y1="561.36" y2="561.36" stroke="#8a8a8a"/><line x1="0" x2="24.8" y1="573.67" y2="573.67" stroke="#8a8a8a"/><line x1="0" x2="24.8" y1="585.98" y2="585.98" stroke="#8a8a8a"/><line x1="0" x2="24.8" y1="598.29" y2="598.29" stroke="#8a8a8a"/><line x1="0" x2="24.8" y1="610.60" y2="610.60" stroke="#8a8a8a"/><line x1="0" x2="24.8" y1="622.91" y2="622.91" stroke="#8a8a8a"/><line x1="0" x2="24.8" y1="635.22" y2="635.22" stroke="#8a8a8a"/><line x1="0" x2="24.8" y1="647.53" y2="647.53" stroke="#8a8a8a"/><line x1="0" x2="24.8" y1="659.84" y2="659.84" stroke="#8a8a8a"/><line x1="0" x2="24.8" y1="672.15" y2="672.15" stroke="#8a8a8a"/><line x1="0" x2="24.8" y1="684.46" y2="684.46" stroke="#8a8a8a"/><line x1="0" x2="24.8" y1="696.77" y2="696.77" stroke="#8a8a8a"/><line x1="0" x2="24.8" y1="709.08" y2="709.08" stroke="#8a8a8a"/><line x1="0" x2="24.8" y1="721.39" y2="721.39" stroke="#8a8a8a"/><line x1="0" x2="24.8" y1="733.70" y2="733.70" stroke="#8a8a8a"/><line x1="0.7" x2="0.7" y1="105" y2="744" stroke="#7a7a7a" stroke-width="1.4"/><rect x="784.4" y="131.2" width="10" height="11.6" fill="none" stroke="#000" stroke-width="2"/></svg>
<div class="t c" style="left:24.80px;top:107px;width:52.80px;font-size:7.6px;transform:scaleY(1.25);transform-origin:50% 9px">A</div>
<div class="t c" style="left:77.60px;top:107px;width:58.80px;font-size:7.6px;transform:scaleY(1.25);transform-origin:50% 9px">B</div>
<div class="t c" style="left:136.40px;top:107px;width:61.00px;font-size:7.6px;transform:scaleY(1.25);transform-origin:50% 9px">C</div>
<div class="t c" style="left:197.40px;top:107px;width:61.00px;font-size:7.6px;transform:scaleY(1.25);transform-origin:50% 9px">D</div>
<div class="t c" style="left:258.40px;top:107px;width:58.60px;font-size:7.6px;transform:scaleY(1.25);transform-origin:50% 9px">E</div>
<div class="t c" style="left:317.00px;top:107px;width:67.60px;font-size:7.6px;transform:scaleY(1.25);transform-origin:50% 9px">F</div>
<div class="t c" style="left:384.60px;top:107px;width:73.00px;font-size:7.6px;transform:scaleY(1.25);transform-origin:50% 9px">G</div>
<div class="t c" style="left:457.60px;top:107px;width:59.00px;font-size:7.6px;transform:scaleY(1.25);transform-origin:50% 9px">H</div>
<div class="t c" style="left:516.60px;top:107px;width:58.00px;font-size:7.6px;transform:scaleY(1.25);transform-origin:50% 9px">I</div>
<div class="t c" style="left:574.60px;top:107px;width:59.10px;font-size:7.6px;transform:scaleY(1.25);transform-origin:50% 9px">J</div>
<div class="t c" style="left:633.70px;top:107px;width:74.80px;font-size:7.6px;transform:scaleY(1.25);transform-origin:50% 9px">K</div>
<div class="t c" style="left:708.50px;top:107px;width:75.50px;font-size:7.6px;transform:scaleY(1.25);transform-origin:50% 9px">L</div>
<div class="t c" style="left:784px;top:107px;width:30px;font-size:7.6px;color:#fff;transform:scaleY(1.25);transform-origin:50% 9px">M</div>
<div class="t c" style="left:1px;top:119.70px;width:24px;font-size:8.2px;color:#0a0a0a;transform:scaleY(1.2);transform-origin:50% 9px">1</div>
<div class="t c" style="left:1px;top:132.01px;width:24px;font-size:8.2px;color:#fff;transform:scaleY(1.2);transform-origin:50% 9px">2</div>
<div class="t c" style="left:1px;top:144.32px;width:24px;font-size:8.2px;color:#0a0a0a;transform:scaleY(1.2);transform-origin:50% 9px">3</div>
<div class="t c" style="left:1px;top:156.63px;width:24px;font-size:8.2px;color:#0a0a0a;transform:scaleY(1.2);transform-origin:50% 9px">4</div>
<div class="t c" style="left:1px;top:168.94px;width:24px;font-size:8.2px;color:#0a0a0a;transform:scaleY(1.2);transform-origin:50% 9px">5</div>
<div class="t c" style="left:1px;top:181.25px;width:24px;font-size:8.2px;color:#0a0a0a;transform:scaleY(1.2);transform-origin:50% 9px">6</div>
<div class="t c" style="left:1px;top:193.56px;width:24px;font-size:8.2px;color:#0a0a0a;transform:scaleY(1.2);transform-origin:50% 9px">7</div>
<div class="t c" style="left:1px;top:205.87px;width:24px;font-size:8.2px;color:#0a0a0a;transform:scaleY(1.2);transform-origin:50% 9px">8</div>
<div class="t c" style="left:1px;top:218.18px;width:24px;font-size:8.2px;color:#0a0a0a;transform:scaleY(1.2);transform-origin:50% 9px">9</div>
<div class="t c" style="left:1px;top:230.49px;width:24px;font-size:8.2px;color:#0a0a0a;transform:scaleY(1.2);transform-origin:50% 9px">10</div>
<div class="t c" style="left:1px;top:242.80px;width:24px;font-size:8.2px;color:#0a0a0a;transform:scaleY(1.2);transform-origin:50% 9px">11</div>
<div class="t c" style="left:1px;top:255.11px;width:24px;font-size:8.2px;color:#0a0a0a;transform:scaleY(1.2);transform-origin:50% 9px">12</div>
<div class="t c" style="left:1px;top:267.42px;width:24px;font-size:8.2px;color:#0a0a0a;transform:scaleY(1.2);transform-origin:50% 9px">13</div>
<div class="t c" style="left:1px;top:279.73px;width:24px;font-size:8.2px;color:#0a0a0a;transform:scaleY(1.2);transform-origin:50% 9px">14</div>
<div class="t c" style="left:1px;top:292.04px;width:24px;font-size:8.2px;color:#0a0a0a;transform:scaleY(1.2);transform-origin:50% 9px">15</div>
<div class="t c" style="left:1px;top:304.35px;width:24px;font-size:8.2px;color:#0a0a0a;transform:scaleY(1.2);transform-origin:50% 9px">16</div>
<div class="t c" style="left:1px;top:316.66px;width:24px;font-size:8.2px;color:#0a0a0a;transform:scaleY(1.2);transform-origin:50% 9px">17</div>
<div class="t c" style="left:1px;top:328.97px;width:24px;font-size:8.2px;color:#0a0a0a;transform:scaleY(1.2);transform-origin:50% 9px">18</div>
<div class="t c" style="left:1px;top:341.28px;width:24px;font-size:8.2px;color:#0a0a0a;transform:scaleY(1.2);transform-origin:50% 9px">19</div>
<div class="t c" style="left:1px;top:353.59px;width:24px;font-size:8.2px;color:#0a0a0a;transform:scaleY(1.2);transform-origin:50% 9px">20</div>
<div class="t c" style="left:1px;top:365.90px;width:24px;font-size:8.2px;color:#0a0a0a;transform:scaleY(1.2);transform-origin:50% 9px">21</div>
<div class="t c" style="left:1px;top:378.21px;width:24px;font-size:8.2px;color:#0a0a0a;transform:scaleY(1.2);transform-origin:50% 9px">22</div>
<div class="t c" style="left:1px;top:390.52px;width:24px;font-size:8.2px;color:#0a0a0a;transform:scaleY(1.2);transform-origin:50% 9px">23</div>
<div class="t c" style="left:1px;top:402.83px;width:24px;font-size:8.2px;color:#0a0a0a;transform:scaleY(1.2);transform-origin:50% 9px">24</div>
<div class="t c" style="left:1px;top:415.14px;width:24px;font-size:8.2px;color:#0a0a0a;transform:scaleY(1.2);transform-origin:50% 9px">25</div>
<div class="t c" style="left:1px;top:427.45px;width:24px;font-size:8.2px;color:#0a0a0a;transform:scaleY(1.2);transform-origin:50% 9px">26</div>
<div class="t c" style="left:1px;top:439.76px;width:24px;font-size:8.2px;color:#0a0a0a;transform:scaleY(1.2);transform-origin:50% 9px">27</div>
<div class="t c" style="left:1px;top:452.07px;width:24px;font-size:8.2px;color:#0a0a0a;transform:scaleY(1.2);transform-origin:50% 9px">28</div>
<div class="t c" style="left:1px;top:464.38px;width:24px;font-size:8.2px;color:#0a0a0a;transform:scaleY(1.2);transform-origin:50% 9px">29</div>
<div class="t c" style="left:1px;top:476.69px;width:24px;font-size:8.2px;color:#0a0a0a;transform:scaleY(1.2);transform-origin:50% 9px">30</div>
<div class="t c" style="left:1px;top:489.00px;width:24px;font-size:8.2px;color:#0a0a0a;transform:scaleY(1.2);transform-origin:50% 9px">31</div>
<div class="t c" style="left:1px;top:501.31px;width:24px;font-size:8.2px;color:#0a0a0a;transform:scaleY(1.2);transform-origin:50% 9px">32</div>
<div class="t c" style="left:1px;top:513.62px;width:24px;font-size:8.2px;color:#0a0a0a;transform:scaleY(1.2);transform-origin:50% 9px">33</div>
<div class="t c" style="left:1px;top:525.93px;width:24px;font-size:8.2px;color:#0a0a0a;transform:scaleY(1.2);transform-origin:50% 9px">34</div>
<div class="t c" style="left:1px;top:538.24px;width:24px;font-size:8.2px;color:#0a0a0a;transform:scaleY(1.2);transform-origin:50% 9px">35</div>
<div class="t c" style="left:1px;top:550.55px;width:24px;font-size:8.2px;color:#0a0a0a;transform:scaleY(1.2);transform-origin:50% 9px">36</div>
<div class="t c" style="left:1px;top:562.86px;width:24px;font-size:8.2px;color:#0a0a0a;transform:scaleY(1.2);transform-origin:50% 9px">37</div>
<div class="t c" style="left:1px;top:575.17px;width:24px;font-size:8.2px;color:#0a0a0a;transform:scaleY(1.2);transform-origin:50% 9px">38</div>
<div class="t c" style="left:1px;top:587.48px;width:24px;font-size:8.2px;color:#0a0a0a;transform:scaleY(1.2);transform-origin:50% 9px">39</div>
<div class="t c" style="left:1px;top:599.79px;width:24px;font-size:8.2px;color:#0a0a0a;transform:scaleY(1.2);transform-origin:50% 9px">40</div>
<div class="t c" style="left:1px;top:612.10px;width:24px;font-size:8.2px;color:#0a0a0a;transform:scaleY(1.2);transform-origin:50% 9px">41</div>
<div class="t c" style="left:1px;top:624.41px;width:24px;font-size:8.2px;color:#0a0a0a;transform:scaleY(1.2);transform-origin:50% 9px">42</div>
<div class="t c" style="left:1px;top:636.72px;width:24px;font-size:8.2px;color:#0a0a0a;transform:scaleY(1.2);transform-origin:50% 9px">43</div>
<div class="t c" style="left:1px;top:649.03px;width:24px;font-size:8.2px;color:#0a0a0a;transform:scaleY(1.2);transform-origin:50% 9px">44</div>
<div class="t c" style="left:1px;top:661.34px;width:24px;font-size:8.2px;color:#0a0a0a;transform:scaleY(1.2);transform-origin:50% 9px">45</div>
<div class="t c" style="left:1px;top:673.65px;width:24px;font-size:8.2px;color:#0a0a0a;transform:scaleY(1.2);transform-origin:50% 9px">46</div>
<div class="t c" style="left:1px;top:685.96px;width:24px;font-size:8.2px;color:#0a0a0a;transform:scaleY(1.2);transform-origin:50% 9px">47</div>
<div class="t c" style="left:1px;top:698.27px;width:24px;font-size:8.2px;color:#0a0a0a;transform:scaleY(1.2);transform-origin:50% 9px">48</div>
<div class="t c" style="left:1px;top:710.58px;width:24px;font-size:8.2px;color:#0a0a0a;transform:scaleY(1.2);transform-origin:50% 9px">49</div>
<div class="t c" style="left:1px;top:722.89px;width:24px;font-size:8.2px;color:#0a0a0a;transform:scaleY(1.2);transform-origin:50% 9px">50</div>
<div class="t c" style="left:24.80px;top:119.90px;width:52.80px;transform-origin:50% 9px">Round</div>
<div class="t c" style="left:77.60px;top:119.90px;width:58.80px;transform-origin:50% 9px">Player #1</div>
<div class="t c" style="left:136.40px;top:119.90px;width:61.00px;transform-origin:50% 9px">Player #2</div>
<div class="t c" style="left:197.40px;top:119.90px;width:61.00px;transform-origin:50% 9px">Win/Loss #1</div>
<div class="t c" style="left:258.40px;top:119.90px;width:58.60px;transform-origin:50% 9px">Win/Loss #2</div>
<div class="t c" style="left:574.60px;top:119.90px;width:59.10px;transform-origin:50% 9px">K</div>
<div class="t c" style="left:633.70px;top:119.90px;width:74.80px;transform-origin:50% 9px">Future Score #1</div>
<div class="t c" style="left:708.50px;top:119.90px;width:75.50px;transform-origin:50% 9px">Future Score #2</div>
<div class="t r" style="right:711.60px;top:131.41px;font-size:9.15px">1</div>
<div class="t r" style="right:652.80px;top:131.41px;font-size:9.15px">1500</div>
<div class="t r" style="right:591.80px;top:131.41px;font-size:9.15px">1500</div>
<div class="t r" style="right:530.80px;top:131.41px;font-size:9.15px">1</div>
<div class="t r" style="right:472.20px;top:131.41px;font-size:9.15px">0</div>
<div class="t r" style="right:404.60px;top:131.41px;font-size:9.15px">5623.4132519</div>
<div class="t r" style="right:331.60px;top:131.41px;font-size:9.15px">5623.413251904</div>
<div class="t r" style="right:272.60px;top:131.41px;font-size:9.15px">0.5</div>
<div class="t r" style="right:214.60px;top:131.41px;font-size:9.15px">0.5</div>
<div class="t r" style="right:155.50px;top:131.41px;font-size:9.15px">20</div>
<div class="t r" style="right:80.70px;top:131.41px;font-size:9.15px">1510</div>
<div class="t r" style="right:5.20px;top:131.41px;font-size:9.15px">1490</div>
<div class="t r" style="right:711.60px;top:143.72px;font-size:9.15px">2</div>
<div class="t r" style="right:652.80px;top:143.72px;font-size:9.15px">1510</div>
<div class="t r" style="right:591.80px;top:143.72px;font-size:9.15px">1500</div>
<div class="t r" style="right:530.80px;top:143.72px;font-size:9.15px">1</div>
<div class="t r" style="right:472.20px;top:143.72px;font-size:9.15px">0</div>
<div class="t r" style="right:404.60px;top:143.72px;font-size:9.15px">5956.62143529</div>
<div class="t r" style="right:331.60px;top:143.72px;font-size:9.15px">5623.413251904</div>
<div class="t r" style="right:272.60px;top:143.72px;font-size:9.15px">0.514387184</div>
<div class="t r" style="right:214.60px;top:143.72px;font-size:9.15px">0.485612816</div>
<div class="t r" style="right:155.50px;top:143.72px;font-size:9.15px">20</div>
<div class="t r" style="right:80.70px;top:143.72px;font-size:9.15px">1520</div>
<div class="t r" style="right:5.20px;top:143.72px;font-size:9.15px">1490</div>
<div class="t r" style="right:711.60px;top:156.03px;font-size:9.15px">3</div>
<div class="t r" style="right:652.80px;top:156.03px;font-size:9.15px">1520</div>
<div class="t r" style="right:591.80px;top:156.03px;font-size:9.15px">1500</div>
<div class="t r" style="right:530.80px;top:156.03px;font-size:9.15px">1</div>
<div class="t r" style="right:472.20px;top:156.03px;font-size:9.15px">0</div>
<div class="t r" style="right:404.60px;top:156.03px;font-size:9.15px">6309.5734448</div>
<div class="t r" style="right:331.60px;top:156.03px;font-size:9.15px">5623.413251904</div>
<div class="t r" style="right:272.60px;top:156.03px;font-size:9.15px">0.528750564</div>
<div class="t r" style="right:214.60px;top:156.03px;font-size:9.15px">0.471249436</div>
<div class="t r" style="right:155.50px;top:156.03px;font-size:9.15px">20</div>
<div class="t r" style="right:80.70px;top:156.03px;font-size:9.15px">1529</div>
<div class="t r" style="right:5.20px;top:156.03px;font-size:9.15px">1491</div>
<div class="t r" style="right:711.60px;top:168.34px;font-size:9.15px">4</div>
<div class="t r" style="right:652.80px;top:168.34px;font-size:9.15px">1529</div>
<div class="t r" style="right:591.80px;top:168.34px;font-size:9.15px">1500</div>
<div class="t r" style="right:530.80px;top:168.34px;font-size:9.15px">1</div>
<div class="t r" style="right:472.20px;top:168.34px;font-size:9.15px">0</div>
<div class="t r" style="right:404.60px;top:168.34px;font-size:9.15px">6645.07672908</div>
<div class="t r" style="right:331.60px;top:168.34px;font-size:9.15px">5623.413251904</div>
<div class="t r" style="right:272.60px;top:168.34px;font-size:9.15px">0.541637703</div>
<div class="t r" style="right:214.60px;top:168.34px;font-size:9.15px">0.458362297</div>
<div class="t r" style="right:155.50px;top:168.34px;font-size:9.15px">20</div>
<div class="t r" style="right:80.70px;top:168.34px;font-size:9.15px">1538</div>
<div class="t r" style="right:5.20px;top:168.34px;font-size:9.15px">1491</div>
<div class="t r" style="right:711.60px;top:180.65px;font-size:9.15px">5</div>
<div class="t r" style="right:652.80px;top:180.65px;font-size:9.15px">1538</div>
<div class="t r" style="right:591.80px;top:180.65px;font-size:9.15px">1500</div>
<div class="t r" style="right:530.80px;top:180.65px;font-size:9.15px">1</div>
<div class="t r" style="right:472.20px;top:180.65px;font-size:9.15px">0</div>
<div class="t r" style="right:404.60px;top:180.65px;font-size:9.15px">6998.41996002</div>
<div class="t r" style="right:331.60px;top:180.65px;font-size:9.15px">5623.413251904</div>
<div class="t r" style="right:272.60px;top:180.65px;font-size:9.15px">0.554469374</div>
<div class="t r" style="right:214.60px;top:180.65px;font-size:9.15px">0.445530626</div>
<div class="t r" style="right:155.50px;top:180.65px;font-size:9.15px">20</div>
<div class="t r" style="right:80.70px;top:180.65px;font-size:9.15px">1547</div>
<div class="t r" style="right:5.20px;top:180.65px;font-size:9.15px">1491</div>
<div class="t r" style="right:711.60px;top:192.96px;font-size:9.15px">6</div>
<div class="t r" style="right:652.80px;top:192.96px;font-size:9.15px">1547</div>
<div class="t r" style="right:591.80px;top:192.96px;font-size:9.15px">1500</div>
<div class="t r" style="right:530.80px;top:192.96px;font-size:9.15px">1</div>
<div class="t r" style="right:472.20px;top:192.96px;font-size:9.15px">0</div>
<div class="t r" style="right:404.60px;top:192.96px;font-size:9.15px">7370.55175338</div>
<div class="t r" style="right:331.60px;top:192.96px;font-size:9.15px">5623.413251904</div>
<div class="t r" style="right:272.60px;top:192.96px;font-size:9.15px">0.567228844</div>
<div class="t r" style="right:214.60px;top:192.96px;font-size:9.15px">0.432771156</div>
<div class="t r" style="right:155.50px;top:192.96px;font-size:9.15px">20</div>
<div class="t r" style="right:80.70px;top:192.96px;font-size:9.15px">1556</div>
<div class="t r" style="right:5.20px;top:192.96px;font-size:9.15px">1491</div>
<div class="t r" style="right:711.60px;top:205.27px;font-size:9.15px">7</div>
<div class="t r" style="right:652.80px;top:205.27px;font-size:9.15px">1556</div>
<div class="t r" style="right:591.80px;top:205.27px;font-size:9.15px">1500</div>
<div class="t r" style="right:530.80px;top:205.27px;font-size:9.15px">1</div>
<div class="t r" style="right:472.20px;top:205.27px;font-size:9.15px">0</div>
<div class="t r" style="right:404.60px;top:205.27px;font-size:9.15px">7762.47116629</div>
<div class="t r" style="right:331.60px;top:205.27px;font-size:9.15px">5623.413251904</div>
<div class="t r" style="right:272.60px;top:205.27px;font-size:9.15px">0.57989976</div>
<div class="t r" style="right:214.60px;top:205.27px;font-size:9.15px">0.42010024</div>
<div class="t r" style="right:155.50px;top:205.27px;font-size:9.15px">20</div>
<div class="t r" style="right:80.70px;top:205.27px;font-size:9.15px">1564</div>
<div class="t r" style="right:5.20px;top:205.27px;font-size:9.15px">1492</div>
<div class="t r" style="right:711.60px;top:217.58px;font-size:9.15px">8</div>
<div class="t r" style="right:652.80px;top:217.58px;font-size:9.15px">1564</div>
<div class="t r" style="right:591.80px;top:217.58px;font-size:9.15px">1500</div>
<div class="t r" style="right:530.80px;top:217.58px;font-size:9.15px">1</div>
<div class="t r" style="right:472.20px;top:217.58px;font-size:9.15px">0</div>
<div class="t r" style="right:404.60px;top:217.58px;font-size:9.15px">8128.30516164</div>
<div class="t r" style="right:331.60px;top:217.58px;font-size:9.15px">5623.413251904</div>
<div class="t r" style="right:272.60px;top:217.58px;font-size:9.15px">0.591075596</div>
<div class="t r" style="right:214.60px;top:217.58px;font-size:9.15px">0.408924404</div>
<div class="t r" style="right:155.50px;top:217.58px;font-size:9.15px">20</div>
<div class="t r" style="right:80.70px;top:217.58px;font-size:9.15px">1572</div>
<div class="t r" style="right:5.20px;top:217.58px;font-size:9.15px">1492</div>
<div class="t r" style="right:711.60px;top:229.89px;font-size:9.15px">9</div>
<div class="t r" style="right:652.80px;top:229.89px;font-size:9.15px">1572</div>
<div class="t r" style="right:591.80px;top:229.89px;font-size:9.15px">1500</div>
<div class="t r" style="right:530.80px;top:229.89px;font-size:9.15px">1</div>
<div class="t r" style="right:472.20px;top:229.89px;font-size:9.15px">0</div>
<div class="t r" style="right:404.60px;top:229.89px;font-size:9.15px">8511.38038202</div>
<div class="t r" style="right:331.60px;top:229.89px;font-size:9.15px">5623.413251904</div>
<div class="t r" style="right:272.60px;top:229.89px;font-size:9.15px">0.602158093</div>
<div class="t r" style="right:214.60px;top:229.89px;font-size:9.15px">0.397841907</div>
<div class="t r" style="right:155.50px;top:229.89px;font-size:9.15px">20</div>
<div class="t r" style="right:80.70px;top:229.89px;font-size:9.15px">1580</div>
<div class="t r" style="right:5.20px;top:229.89px;font-size:9.15px">1492</div>
<div class="t r" style="right:711.60px;top:242.20px;font-size:9.15px">10</div>
<div class="t r" style="right:652.80px;top:242.20px;font-size:9.15px">1580</div>
<div class="t r" style="right:591.80px;top:242.20px;font-size:9.15px">1500</div>
<div class="t r" style="right:530.80px;top:242.20px;font-size:9.15px">1</div>
<div class="t r" style="right:472.20px;top:242.20px;font-size:9.15px">0</div>
<div class="t r" style="right:404.60px;top:242.20px;font-size:9.15px">8912.50938134</div>
<div class="t r" style="right:331.60px;top:242.20px;font-size:9.15px">5623.413251904</div>
<div class="t r" style="right:272.60px;top:242.20px;font-size:9.15px">0.61313682</div>
<div class="t r" style="right:214.60px;top:242.20px;font-size:9.15px">0.38686318</div>
<div class="t r" style="right:155.50px;top:242.20px;font-size:9.15px">20</div>
<div class="t r" style="right:80.70px;top:242.20px;font-size:9.15px">1588</div>
<div class="t r" style="right:5.20px;top:242.20px;font-size:9.15px">1492</div>
<div class="t r" style="right:711.60px;top:254.51px;font-size:9.15px">11</div>
<div class="t r" style="right:652.80px;top:254.51px;font-size:9.15px">1588</div>
<div class="t r" style="right:591.80px;top:254.51px;font-size:9.15px">1500</div>
<div class="t r" style="right:530.80px;top:254.51px;font-size:9.15px">1</div>
<div class="t r" style="right:472.20px;top:254.51px;font-size:9.15px">0</div>
<div class="t r" style="right:404.60px;top:254.51px;font-size:9.15px">9332.54300797</div>
<div class="t r" style="right:331.60px;top:254.51px;font-size:9.15px">5623.413251904</div>
<div class="t r" style="right:272.60px;top:254.51px;font-size:9.15px">0.624001759</div>
<div class="t r" style="right:214.60px;top:254.51px;font-size:9.15px">0.375998241</div>
<div class="t r" style="right:155.50px;top:254.51px;font-size:9.15px">20</div>
<div class="t r" style="right:80.70px;top:254.51px;font-size:9.15px">1596</div>
<div class="t r" style="right:5.20px;top:254.51px;font-size:9.15px">1492</div>
<div class="t r" style="right:711.60px;top:266.82px;font-size:9.15px">12</div>
<div class="t r" style="right:652.80px;top:266.82px;font-size:9.15px">1596</div>
<div class="t r" style="right:591.80px;top:266.82px;font-size:9.15px">1500</div>
<div class="t r" style="right:530.80px;top:266.82px;font-size:9.15px">1</div>
<div class="t r" style="right:472.20px;top:266.82px;font-size:9.15px">0</div>
<div class="t r" style="right:404.60px;top:266.82px;font-size:9.15px">9772.37220956</div>
<div class="t r" style="right:331.60px;top:266.82px;font-size:9.15px">5623.413251904</div>
<div class="t r" style="right:272.60px;top:266.82px;font-size:9.15px">0.634743335</div>
<div class="t r" style="right:214.60px;top:266.82px;font-size:9.15px">0.365256665</div>
<div class="t r" style="right:155.50px;top:266.82px;font-size:9.15px">20</div>
<div class="t r" style="right:80.70px;top:266.82px;font-size:9.15px">1603</div>
<div class="t r" style="right:5.20px;top:266.82px;font-size:9.15px">1493</div>
<div class="t r" style="right:711.60px;top:279.13px;font-size:9.15px">13</div>
<div class="t r" style="right:652.80px;top:279.13px;font-size:9.15px">1603</div>
<div class="t r" style="right:591.80px;top:279.13px;font-size:9.15px">1500</div>
<div class="t r" style="right:530.80px;top:279.13px;font-size:9.15px">1</div>
<div class="t r" style="right:472.20px;top:279.13px;font-size:9.15px">0</div>
<div class="t r" style="right:404.60px;top:279.13px;font-size:9.15px">10174.1936618</div>
<div class="t r" style="right:331.60px;top:279.13px;font-size:9.15px">5623.413251904</div>
<div class="t r" style="right:272.60px;top:279.13px;font-size:9.15px">0.644033854</div>
<div class="t r" style="right:214.60px;top:279.13px;font-size:9.15px">0.355966146</div>
<div class="t r" style="right:155.50px;top:279.13px;font-size:9.15px">20</div>
<div class="t r" style="right:80.70px;top:279.13px;font-size:9.15px">1610</div>
<div class="t r" style="right:5.20px;top:279.13px;font-size:9.15px">1493</div>
<div class="t r" style="right:711.60px;top:291.44px;font-size:9.15px">14</div>
<div class="t r" style="right:652.80px;top:291.44px;font-size:9.15px">1610</div>
<div class="t r" style="right:591.80px;top:291.44px;font-size:9.15px">1500</div>
<div class="t r" style="right:530.80px;top:291.44px;font-size:9.15px">1</div>
<div class="t r" style="right:472.20px;top:291.44px;font-size:9.15px">0</div>
<div class="t r" style="right:404.60px;top:291.44px;font-size:9.15px">10592.5372518</div>
<div class="t r" style="right:331.60px;top:291.44px;font-size:9.15px">5623.413251904</div>
<div class="t r" style="right:272.60px;top:291.44px;font-size:9.15px">0.653217167</div>
<div class="t r" style="right:214.60px;top:291.44px;font-size:9.15px">0.346782833</div>
<div class="t r" style="right:155.50px;top:291.44px;font-size:9.15px">20</div>
<div class="t r" style="right:80.70px;top:291.44px;font-size:9.15px">1617</div>
<div class="t r" style="right:5.20px;top:291.44px;font-size:9.15px">1493</div>
<div class="t r" style="right:711.60px;top:303.75px;font-size:9.15px">15</div>
<div class="t r" style="right:652.80px;top:303.75px;font-size:9.15px">1617</div>
<div class="t r" style="right:591.80px;top:303.75px;font-size:9.15px">1500</div>
<div class="t r" style="right:530.80px;top:303.75px;font-size:9.15px">1</div>
<div class="t r" style="right:472.20px;top:303.75px;font-size:9.15px">0</div>
<div class="t r" style="right:404.60px;top:303.75px;font-size:9.15px">11028.0823385</div>
<div class="t r" style="right:331.60px;top:303.75px;font-size:9.15px">5623.413251904</div>
<div class="t r" style="right:272.60px;top:303.75px;font-size:9.15px">0.662287797</div>
<div class="t r" style="right:214.60px;top:303.75px;font-size:9.15px">0.337712203</div>
<div class="t r" style="right:155.50px;top:303.75px;font-size:9.15px">20</div>
<div class="t r" style="right:80.70px;top:303.75px;font-size:9.15px">1624</div>
<div class="t r" style="right:5.20px;top:303.75px;font-size:9.15px">1493</div>
<div class="t r" style="right:711.60px;top:316.06px;font-size:9.15px">16</div>
<div class="t r" style="right:652.80px;top:316.06px;font-size:9.15px">1624</div>
<div class="t r" style="right:591.80px;top:316.06px;font-size:9.15px">1500</div>
<div class="t r" style="right:530.80px;top:316.06px;font-size:9.15px">1</div>
<div class="t r" style="right:472.20px;top:316.06px;font-size:9.15px">0</div>
<div class="t r" style="right:404.60px;top:316.06px;font-size:9.15px">11481.536215</div>
<div class="t r" style="right:331.60px;top:316.06px;font-size:9.15px">5623.413251904</div>
<div class="t r" style="right:272.60px;top:316.06px;font-size:9.15px">0.671240581</div>
<div class="t r" style="right:214.60px;top:316.06px;font-size:9.15px">0.328759419</div>
<div class="t r" style="right:155.50px;top:316.06px;font-size:9.15px">20</div>
<div class="t r" style="right:80.70px;top:316.06px;font-size:9.15px">1631</div>
<div class="t r" style="right:5.20px;top:316.06px;font-size:9.15px">1493</div>
<div class="t r" style="right:711.60px;top:328.37px;font-size:9.15px">17</div>
<div class="t r" style="right:652.80px;top:328.37px;font-size:9.15px">1631</div>
<div class="t r" style="right:591.80px;top:328.37px;font-size:9.15px">1500</div>
<div class="t r" style="right:530.80px;top:328.37px;font-size:9.15px">1</div>
<div class="t r" style="right:472.20px;top:328.37px;font-size:9.15px">0</div>
<div class="t r" style="right:404.60px;top:328.37px;font-size:9.15px">11953.6352567</div>
<div class="t r" style="right:331.60px;top:328.37px;font-size:9.15px">5623.413251904</div>
<div class="t r" style="right:272.60px;top:328.37px;font-size:9.15px">0.680070676</div>
<div class="t r" style="right:214.60px;top:328.37px;font-size:9.15px">0.319929324</div>
<div class="t r" style="right:155.50px;top:328.37px;font-size:9.15px">20</div>
<div class="t r" style="right:80.70px;top:328.37px;font-size:9.15px">1637</div>
<div class="t r" style="right:5.20px;top:328.37px;font-size:9.15px">1494</div>
<div class="t r" style="right:711.60px;top:340.68px;font-size:9.15px">18</div>
<div class="t r" style="right:652.80px;top:340.68px;font-size:9.15px">1637</div>
<div class="t r" style="right:591.80px;top:340.68px;font-size:9.15px">1500</div>
<div class="t r" style="right:530.80px;top:340.68px;font-size:9.15px">1</div>
<div class="t r" style="right:472.20px;top:340.68px;font-size:9.15px">0</div>
<div class="t r" style="right:404.60px;top:340.68px;font-size:9.15px">12373.7118994</div>
<div class="t r" style="right:331.60px;top:340.68px;font-size:9.15px">5623.413251904</div>
<div class="t r" style="right:272.60px;top:340.68px;font-size:9.15px">0.687538248</div>
<div class="t r" style="right:214.60px;top:340.68px;font-size:9.15px">0.312461752</div>
<div class="t r" style="right:155.50px;top:340.68px;font-size:9.15px">20</div>
<div class="t r" style="right:80.70px;top:340.68px;font-size:9.15px">1643</div>
<div class="t r" style="right:5.20px;top:340.68px;font-size:9.15px">1494</div>
<div class="t r" style="right:711.60px;top:352.99px;font-size:9.15px">19</div>
<div class="t r" style="right:652.80px;top:352.99px;font-size:9.15px">1643</div>
<div class="t r" style="right:591.80px;top:352.99px;font-size:9.15px">1500</div>
<div class="t r" style="right:530.80px;top:352.99px;font-size:9.15px">1</div>
<div class="t r" style="right:472.20px;top:352.99px;font-size:9.15px">0</div>
<div class="t r" style="right:404.60px;top:352.99px;font-size:9.15px">12808.5509454</div>
<div class="t r" style="right:331.60px;top:352.99px;font-size:9.15px">5623.413251904</div>
<div class="t r" style="right:272.60px;top:352.99px;font-size:9.15px">0.694909713</div>
<div class="t r" style="right:214.60px;top:352.99px;font-size:9.15px">0.305090287</div>
<div class="t r" style="right:155.50px;top:352.99px;font-size:9.15px">20</div>
<div class="t r" style="right:80.70px;top:352.99px;font-size:9.15px">1649</div>
<div class="t r" style="right:5.20px;top:352.99px;font-size:9.15px">1494</div>
<div class="t r" style="right:711.60px;top:365.30px;font-size:9.15px">20</div>
<div class="t r" style="right:652.80px;top:365.30px;font-size:9.15px">1649</div>
<div class="t r" style="right:591.80px;top:365.30px;font-size:9.15px">1500</div>
<div class="t r" style="right:530.80px;top:365.30px;font-size:9.15px">1</div>
<div class="t r" style="right:472.20px;top:365.30px;font-size:9.15px">0</div>
<div class="t r" style="right:404.60px;top:365.30px;font-size:9.15px">13258.6711776</div>
<div class="t r" style="right:331.60px;top:365.30px;font-size:9.15px">5623.413251904</div>
<div class="t r" style="right:272.60px;top:365.30px;font-size:9.15px">0.702182602</div>
<div class="t r" style="right:214.60px;top:365.30px;font-size:9.15px">0.297817398</div>
<div class="t r" style="right:155.50px;top:365.30px;font-size:9.15px">20</div>
<div class="t r" style="right:80.70px;top:365.30px;font-size:9.15px">1655</div>
<div class="t r" style="right:5.20px;top:365.30px;font-size:9.15px">1494</div>
<div class="t r" style="right:711.60px;top:377.61px;font-size:9.15px">21</div>
<div class="t r" style="right:652.80px;top:377.61px;font-size:9.15px">1655</div>
<div class="t r" style="right:591.80px;top:377.61px;font-size:9.15px">1500</div>
<div class="t r" style="right:530.80px;top:377.61px;font-size:9.15px">1</div>
<div class="t r" style="right:472.20px;top:377.61px;font-size:9.15px">0</div>
<div class="t r" style="right:404.60px;top:377.61px;font-size:9.15px">13724.6096101</div>
<div class="t r" style="right:331.60px;top:377.61px;font-size:9.15px">5623.413251904</div>
<div class="t r" style="right:272.60px;top:377.61px;font-size:9.15px">0.709354631</div>
<div class="t r" style="right:214.60px;top:377.61px;font-size:9.15px">0.290645369</div>
<div class="t r" style="right:155.50px;top:377.61px;font-size:9.15px">20</div>
<div class="t r" style="right:80.70px;top:377.61px;font-size:9.15px">1661</div>
<div class="t r" style="right:5.20px;top:377.61px;font-size:9.15px">1494</div>
<div class="t r" style="right:711.60px;top:389.92px;font-size:9.15px">22</div>
<div class="t r" style="right:652.80px;top:389.92px;font-size:9.15px">1661</div>
<div class="t r" style="right:591.80px;top:389.92px;font-size:9.15px">1500</div>
<div class="t r" style="right:530.80px;top:389.92px;font-size:9.15px">1</div>
<div class="t r" style="right:472.20px;top:389.92px;font-size:9.15px">0</div>
<div class="t r" style="right:404.60px;top:389.92px;font-size:9.15px">14206.9221286</div>
<div class="t r" style="right:331.60px;top:389.92px;font-size:9.15px">5623.413251904</div>
<div class="t r" style="right:272.60px;top:389.92px;font-size:9.15px">0.716423694</div>
<div class="t r" style="right:214.60px;top:389.92px;font-size:9.15px">0.283576306</div>
<div class="t r" style="right:155.50px;top:389.92px;font-size:9.15px">20</div>
<div class="t r" style="right:80.70px;top:389.92px;font-size:9.15px">1667</div>
<div class="t r" style="right:5.20px;top:389.92px;font-size:9.15px">1494</div>
<div class="t r" style="right:711.60px;top:402.23px;font-size:9.15px">23</div>
<div class="t r" style="right:652.80px;top:402.23px;font-size:9.15px">1667</div>
<div class="t r" style="right:591.80px;top:402.23px;font-size:9.15px">1500</div>
<div class="t r" style="right:530.80px;top:402.23px;font-size:9.15px">1</div>
<div class="t r" style="right:472.20px;top:402.23px;font-size:9.15px">0</div>
<div class="t r" style="right:404.60px;top:402.23px;font-size:9.15px">14706.184154</div>
<div class="t r" style="right:331.60px;top:402.23px;font-size:9.15px">5623.413251904</div>
<div class="t r" style="right:272.60px;top:402.23px;font-size:9.15px">0.723387869</div>
<div class="t r" style="right:214.60px;top:402.23px;font-size:9.15px">0.276612131</div>
<div class="t r" style="right:155.50px;top:402.23px;font-size:9.15px">20</div>
<div class="t r" style="right:80.70px;top:402.23px;font-size:9.15px">1673</div>
<div class="t r" style="right:5.20px;top:402.23px;font-size:9.15px">1494</div>
<div class="t r" style="right:711.60px;top:414.54px;font-size:9.15px">24</div>
<div class="t r" style="right:652.80px;top:414.54px;font-size:9.15px">1673</div>
<div class="t r" style="right:591.80px;top:414.54px;font-size:9.15px">1500</div>
<div class="t r" style="right:530.80px;top:414.54px;font-size:9.15px">1</div>
<div class="t r" style="right:472.20px;top:414.54px;font-size:9.15px">0</div>
<div class="t r" style="right:404.60px;top:414.54px;font-size:9.15px">15222.9913288</div>
<div class="t r" style="right:331.60px;top:414.54px;font-size:9.15px">5623.413251904</div>
<div class="t r" style="right:272.60px;top:414.54px;font-size:9.15px">0.730245413</div>
<div class="t r" style="right:214.60px;top:414.54px;font-size:9.15px">0.269754587</div>
<div class="t r" style="right:155.50px;top:414.54px;font-size:9.15px">20</div>
<div class="t r" style="right:80.70px;top:414.54px;font-size:9.15px">1678</div>
<div class="t r" style="right:5.20px;top:414.54px;font-size:9.15px">1495</div>
<div class="t r" style="right:711.60px;top:426.85px;font-size:9.15px">25</div>
<div class="t r" style="right:652.80px;top:426.85px;font-size:9.15px">1678</div>
<div class="t r" style="right:591.80px;top:426.85px;font-size:9.15px">1500</div>
<div class="t r" style="right:530.80px;top:426.85px;font-size:9.15px">1</div>
<div class="t r" style="right:472.20px;top:426.85px;font-size:9.15px">0</div>
<div class="t r" style="right:404.60px;top:426.85px;font-size:9.15px">15667.5107011</div>
<div class="t r" style="right:331.60px;top:426.85px;font-size:9.15px">5623.413251904</div>
<div class="t r" style="right:272.60px;top:426.85px;font-size:9.15px">0.735877444</div>
<div class="t r" style="right:214.60px;top:426.85px;font-size:9.15px">0.264122556</div>
<div class="t r" style="right:155.50px;top:426.85px;font-size:9.15px">20</div>
<div class="t r" style="right:80.70px;top:426.85px;font-size:9.15px">1683</div>
<div class="t r" style="right:5.20px;top:426.85px;font-size:9.15px">1495</div>
<div class="t r" style="right:711.60px;top:439.16px;font-size:9.15px">26</div>
<div class="t r" style="right:652.80px;top:439.16px;font-size:9.15px">1683</div>
<div class="t r" style="right:591.80px;top:439.16px;font-size:9.15px">1500</div>
<div class="t r" style="right:530.80px;top:439.16px;font-size:9.15px">1</div>
<div class="t r" style="right:472.20px;top:439.16px;font-size:9.15px">0</div>
<div class="t r" style="right:404.60px;top:439.16px;font-size:9.15px">16125.0102734</div>
<div class="t r" style="right:331.60px;top:439.16px;font-size:9.15px">5623.413251904</div>
<div class="t r" style="right:272.60px;top:439.16px;font-size:9.15px">0.741433523</div>
<div class="t r" style="right:214.60px;top:439.16px;font-size:9.15px">0.258566477</div>
<div class="t r" style="right:155.50px;top:439.16px;font-size:9.15px">20</div>
<div class="t r" style="right:80.70px;top:439.16px;font-size:9.15px">1688</div>
<div class="t r" style="right:5.20px;top:439.16px;font-size:9.15px">1495</div>
<div class="t r" style="right:711.60px;top:451.47px;font-size:9.15px">27</div>
<div class="t r" style="right:652.80px;top:451.47px;font-size:9.15px">1688</div>
<div class="t r" style="right:591.80px;top:451.47px;font-size:9.15px">1500</div>
<div class="t r" style="right:530.80px;top:451.47px;font-size:9.15px">1</div>
<div class="t r" style="right:472.20px;top:451.47px;font-size:9.15px">0</div>
<div class="t r" style="right:404.60px;top:451.47px;font-size:9.15px">16595.8690744</div>
<div class="t r" style="right:331.60px;top:451.47px;font-size:9.15px">5623.413251904</div>
<div class="t r" style="right:272.60px;top:451.47px;font-size:9.15px">0.746912921</div>
<div class="t r" style="right:214.60px;top:451.47px;font-size:9.15px">0.253087079</div>
<div class="t r" style="right:155.50px;top:451.47px;font-size:9.15px">20</div>
<div class="t r" style="right:80.70px;top:451.47px;font-size:9.15px">1693</div>
<div class="t r" style="right:5.20px;top:451.47px;font-size:9.15px">1495</div>
<div class="t r" style="right:711.60px;top:463.78px;font-size:9.15px">28</div>
<div class="t r" style="right:652.80px;top:463.78px;font-size:9.15px">1693</div>
<div class="t r" style="right:591.80px;top:463.78px;font-size:9.15px">1500</div>
<div class="t r" style="right:530.80px;top:463.78px;font-size:9.15px">1</div>
<div class="t r" style="right:472.20px;top:463.78px;font-size:9.15px">0</div>
<div class="t r" style="right:404.60px;top:463.78px;font-size:9.15px">17080.4772006</div>
<div class="t r" style="right:331.60px;top:463.78px;font-size:9.15px">5623.413251904</div>
<div class="t r" style="right:272.60px;top:463.78px;font-size:9.15px">0.752314994</div>
<div class="t r" style="right:214.60px;top:463.78px;font-size:9.15px">0.247685006</div>
<div class="t r" style="right:155.50px;top:463.78px;font-size:9.15px">20</div>
<div class="t r" style="right:80.70px;top:463.78px;font-size:9.15px">1698</div>
<div class="t r" style="right:5.20px;top:463.78px;font-size:9.15px">1495</div>
<div class="t r" style="right:711.60px;top:476.09px;font-size:9.15px">29</div>
<div class="t r" style="right:652.80px;top:476.09px;font-size:9.15px">1698</div>
<div class="t r" style="right:591.80px;top:476.09px;font-size:9.15px">1500</div>
<div class="t r" style="right:530.80px;top:476.09px;font-size:9.15px">1</div>
<div class="t r" style="right:472.20px;top:476.09px;font-size:9.15px">0</div>
<div class="t r" style="right:404.60px;top:476.09px;font-size:9.15px">17579.2361396</div>
<div class="t r" style="right:331.60px;top:476.09px;font-size:9.15px">5623.413251904</div>
<div class="t r" style="right:272.60px;top:476.09px;font-size:9.15px">0.757639175</div>
<div class="t r" style="right:214.60px;top:476.09px;font-size:9.15px">0.242360825</div>
<div class="t r" style="right:155.50px;top:476.09px;font-size:9.15px">20</div>
<div class="t r" style="right:80.70px;top:476.09px;font-size:9.15px">1703</div>
<div class="t r" style="right:5.20px;top:476.09px;font-size:9.15px">1495</div>
<div class="t r" style="right:711.60px;top:488.40px;font-size:9.15px">30</div>
<div class="t r" style="right:652.80px;top:488.40px;font-size:9.15px">1703</div>
<div class="t r" style="right:591.80px;top:488.40px;font-size:9.15px">1500</div>
<div class="t r" style="right:530.80px;top:488.40px;font-size:9.15px">1</div>
<div class="t r" style="right:472.20px;top:488.40px;font-size:9.15px">0</div>
<div class="t r" style="right:404.60px;top:488.40px;font-size:9.15px">18092.5591025</div>
<div class="t r" style="right:331.60px;top:488.40px;font-size:9.15px">5623.413251904</div>
<div class="t r" style="right:272.60px;top:488.40px;font-size:9.15px">0.76288498</div>
<div class="t r" style="right:214.60px;top:488.40px;font-size:9.15px">0.23711502</div>
<div class="t r" style="right:155.50px;top:488.40px;font-size:9.15px">20</div>
<div class="t r" style="right:80.70px;top:488.40px;font-size:9.15px">1708</div>
<div class="t r" style="right:5.20px;top:488.40px;font-size:9.15px">1495</div>
<div class="t r" style="right:711.60px;top:500.71px;font-size:9.15px">31</div>
<div class="t r" style="right:652.80px;top:500.71px;font-size:9.15px">1708</div>
<div class="t r" style="right:591.80px;top:500.71px;font-size:9.15px">1500</div>
<div class="t r" style="right:530.80px;top:500.71px;font-size:9.15px">1</div>
<div class="t r" style="right:472.20px;top:500.71px;font-size:9.15px">0</div>
<div class="t r" style="right:404.60px;top:500.71px;font-size:9.15px">18620.8713666</div>
<div class="t r" style="right:331.60px;top:500.71px;font-size:9.15px">5623.413251904</div>
<div class="t r" style="right:272.60px;top:500.71px;font-size:9.15px">0.768052003</div>
<div class="t r" style="right:214.60px;top:500.71px;font-size:9.15px">0.231947997</div>
<div class="t r" style="right:155.50px;top:500.71px;font-size:9.15px">20</div>
<div class="t r" style="right:80.70px;top:500.71px;font-size:9.15px">1713</div>
<div class="t r" style="right:5.20px;top:500.71px;font-size:9.15px">1495</div>
<div class="t r" style="right:711.60px;top:513.02px;font-size:9.15px">32</div>
<div class="t r" style="right:652.80px;top:513.02px;font-size:9.15px">1713</div>
<div class="t r" style="right:591.80px;top:513.02px;font-size:9.15px">1500</div>
<div class="t r" style="right:530.80px;top:513.02px;font-size:9.15px">1</div>
<div class="t r" style="right:472.20px;top:513.02px;font-size:9.15px">0</div>
<div class="t r" style="right:404.60px;top:513.02px;font-size:9.15px">19164.6106274</div>
<div class="t r" style="right:331.60px;top:513.02px;font-size:9.15px">5623.413251904</div>
<div class="t r" style="right:272.60px;top:513.02px;font-size:9.15px">0.773139913</div>
<div class="t r" style="right:214.60px;top:513.02px;font-size:9.15px">0.226860087</div>
<div class="t r" style="right:155.50px;top:513.02px;font-size:9.15px">20</div>
<div class="t r" style="right:80.70px;top:513.02px;font-size:9.15px">1718</div>
<div class="t r" style="right:5.20px;top:513.02px;font-size:9.15px">1495</div>
<div class="t r" style="right:711.60px;top:525.33px;font-size:9.15px">33</div>
<div class="t r" style="right:652.80px;top:525.33px;font-size:9.15px">1718</div>
<div class="t r" style="right:591.80px;top:525.33px;font-size:9.15px">1500</div>
<div class="t r" style="right:530.80px;top:525.33px;font-size:9.15px">1</div>
<div class="t r" style="right:472.20px;top:525.33px;font-size:9.15px">0</div>
<div class="t r" style="right:404.60px;top:525.33px;font-size:9.15px">19724.2273611</div>
<div class="t r" style="right:331.60px;top:525.33px;font-size:9.15px">5623.413251904</div>
<div class="t r" style="right:272.60px;top:525.33px;font-size:9.15px">0.778148454</div>
<div class="t r" style="right:214.60px;top:525.33px;font-size:9.15px">0.221851546</div>
<div class="t r" style="right:155.50px;top:525.33px;font-size:9.15px">20</div>
<div class="t r" style="right:80.70px;top:525.33px;font-size:9.15px">1722</div>
<div class="t r" style="right:5.20px;top:525.33px;font-size:9.15px">1496</div>
<div class="t r" style="right:711.60px;top:537.64px;font-size:9.15px">34</div>
<div class="t r" style="right:652.80px;top:537.64px;font-size:9.15px">1722</div>
<div class="t r" style="right:591.80px;top:537.64px;font-size:9.15px">1500</div>
<div class="t r" style="right:530.80px;top:537.64px;font-size:9.15px">1</div>
<div class="t r" style="right:472.20px;top:537.64px;font-size:9.15px">0</div>
<div class="t r" style="right:404.60px;top:537.64px;font-size:9.15px">20183.6636368</div>
<div class="t r" style="right:331.60px;top:537.64px;font-size:9.15px">5623.413251904</div>
<div class="t r" style="right:272.60px;top:537.64px;font-size:9.15px">0.782098016</div>
<div class="t r" style="right:214.60px;top:537.64px;font-size:9.15px">0.217901984</div>
<div class="t r" style="right:155.50px;top:537.64px;font-size:9.15px">20</div>
<div class="t r" style="right:80.70px;top:537.64px;font-size:9.15px">1726</div>
<div class="t r" style="right:5.20px;top:537.64px;font-size:9.15px">1496</div>
<div class="t r" style="right:711.60px;top:549.95px;font-size:9.15px">35</div>
<div class="t r" style="right:652.80px;top:549.95px;font-size:9.15px">1726</div>
<div class="t r" style="right:591.80px;top:549.95px;font-size:9.15px">1500</div>
<div class="t r" style="right:530.80px;top:549.95px;font-size:9.15px">1</div>
<div class="t r" style="right:472.20px;top:549.95px;font-size:9.15px">0</div>
<div class="t r" style="right:404.60px;top:549.95px;font-size:9.15px">20653.8015581</div>
<div class="t r" style="right:331.60px;top:549.95px;font-size:9.15px">5623.413251904</div>
<div class="t r" style="right:272.60px;top:549.95px;font-size:9.15px">0.785996602</div>
<div class="t r" style="right:214.60px;top:549.95px;font-size:9.15px">0.214003398</div>
<div class="t r" style="right:155.50px;top:549.95px;font-size:9.15px">20</div>
<div class="t r" style="right:80.70px;top:549.95px;font-size:9.15px">1730</div>
<div class="t r" style="right:5.20px;top:549.95px;font-size:9.15px">1496</div>
<div class="t r" style="right:711.60px;top:562.26px;font-size:9.15px">36</div>
<div class="t r" style="right:652.80px;top:562.26px;font-size:9.15px">1730</div>
<div class="t r" style="right:591.80px;top:562.26px;font-size:9.15px">1500</div>
<div class="t r" style="right:530.80px;top:562.26px;font-size:9.15px">1</div>
<div class="t r" style="right:472.20px;top:562.26px;font-size:9.15px">0</div>
<div class="t r" style="right:404.60px;top:562.26px;font-size:9.15px">21134.8903984</div>
<div class="t r" style="right:331.60px;top:562.26px;font-size:9.15px">5623.413251904</div>
<div class="t r" style="right:272.60px;top:562.26px;font-size:9.15px">0.78984418</div>
<div class="t r" style="right:214.60px;top:562.26px;font-size:9.15px">0.21015582</div>
<div class="t r" style="right:155.50px;top:562.26px;font-size:9.15px">20</div>
<div class="t r" style="right:80.70px;top:562.26px;font-size:9.15px">1734</div>
<div class="t r" style="right:5.20px;top:562.26px;font-size:9.15px">1496</div>
<div class="t r" style="right:711.60px;top:574.57px;font-size:9.15px">37</div>
<div class="t r" style="right:652.80px;top:574.57px;font-size:9.15px">1734</div>
<div class="t r" style="right:591.80px;top:574.57px;font-size:9.15px">1500</div>
<div class="t r" style="right:530.80px;top:574.57px;font-size:9.15px">1</div>
<div class="t r" style="right:472.20px;top:574.57px;font-size:9.15px">0</div>
<div class="t r" style="right:404.60px;top:574.57px;font-size:9.15px">21627.1852373</div>
<div class="t r" style="right:331.60px;top:574.57px;font-size:9.15px">5623.413251904</div>
<div class="t r" style="right:272.60px;top:574.57px;font-size:9.15px">0.793640743</div>
<div class="t r" style="right:214.60px;top:574.57px;font-size:9.15px">0.206359257</div>
<div class="t r" style="right:155.50px;top:574.57px;font-size:9.15px">20</div>
<div class="t r" style="right:80.70px;top:574.57px;font-size:9.15px">1738</div>
<div class="t r" style="right:5.20px;top:574.57px;font-size:9.15px">1496</div>
<div class="t r" style="right:711.60px;top:586.88px;font-size:9.15px">38</div>
<div class="t r" style="right:652.80px;top:586.88px;font-size:9.15px">1738</div>
<div class="t r" style="right:591.80px;top:586.88px;font-size:9.15px">1500</div>
<div class="t r" style="right:530.80px;top:586.88px;font-size:9.15px">1</div>
<div class="t r" style="right:472.20px;top:586.88px;font-size:9.15px">0</div>
<div class="t r" style="right:404.60px;top:586.88px;font-size:9.15px">22130.9470961</div>
<div class="t r" style="right:331.60px;top:586.88px;font-size:9.15px">5623.413251904</div>
<div class="t r" style="right:272.60px;top:586.88px;font-size:9.15px">0.797386314</div>
<div class="t r" style="right:214.60px;top:586.88px;font-size:9.15px">0.202613686</div>
<div class="t r" style="right:155.50px;top:586.88px;font-size:9.15px">20</div>
<div class="t r" style="right:80.70px;top:586.88px;font-size:9.15px">1742</div>
<div class="t r" style="right:5.20px;top:586.88px;font-size:9.15px">1496</div>
<div class="t r" style="right:711.60px;top:599.19px;font-size:9.15px">39</div>
<div class="t r" style="right:652.80px;top:599.19px;font-size:9.15px">1742</div>
<div class="t r" style="right:591.80px;top:599.19px;font-size:9.15px">1500</div>
<div class="t r" style="right:530.80px;top:599.19px;font-size:9.15px">1</div>
<div class="t r" style="right:472.20px;top:599.19px;font-size:9.15px">0</div>
<div class="t r" style="right:404.60px;top:599.19px;font-size:9.15px">22646.4430759</div>
<div class="t r" style="right:331.60px;top:599.19px;font-size:9.15px">5623.413251904</div>
<div class="t r" style="right:272.60px;top:599.19px;font-size:9.15px">0.80108094</div>
<div class="t r" style="right:214.60px;top:599.19px;font-size:9.15px">0.19891906</div>
<div class="t r" style="right:155.50px;top:599.19px;font-size:9.15px">20</div>
<div class="t r" style="right:80.70px;top:599.19px;font-size:9.15px">1746</div>
<div class="t r" style="right:5.20px;top:599.19px;font-size:9.15px">1496</div>
<div class="t r" style="right:711.60px;top:611.50px;font-size:9.15px">40</div>
<div class="t r" style="right:652.80px;top:611.50px;font-size:9.15px">1746</div>
<div class="t r" style="right:591.80px;top:611.50px;font-size:9.15px">1500</div>
<div class="t r" style="right:530.80px;top:611.50px;font-size:9.15px">1</div>
<div class="t r" style="right:472.20px;top:611.50px;font-size:9.15px">0</div>
<div class="t r" style="right:404.60px;top:611.50px;font-size:9.15px">23173.9464997</div>
<div class="t r" style="right:331.60px;top:611.50px;font-size:9.15px">5623.413251904</div>
<div class="t r" style="right:272.60px;top:611.50px;font-size:9.15px">0.804724693</div>
<div class="t r" style="right:214.60px;top:611.50px;font-size:9.15px">0.195275307</div>
<div class="t r" style="right:155.50px;top:611.50px;font-size:9.15px">20</div>
<div class="t r" style="right:80.70px;top:611.50px;font-size:9.15px">1750</div>
<div class="t r" style="right:5.20px;top:611.50px;font-size:9.15px">1496</div>
<div class="t r" style="right:711.60px;top:623.81px;font-size:9.15px">41</div>
<div class="t r" style="right:652.80px;top:623.81px;font-size:9.15px">1750</div>
<div class="t r" style="right:591.80px;top:623.81px;font-size:9.15px">1500</div>
<div class="t r" style="right:530.80px;top:623.81px;font-size:9.15px">1</div>
<div class="t r" style="right:472.20px;top:623.81px;font-size:9.15px">0</div>
<div class="t r" style="right:404.60px;top:623.81px;font-size:9.15px">23713.7370566</div>
<div class="t r" style="right:331.60px;top:623.81px;font-size:9.15px">5623.413251904</div>
<div class="t r" style="right:272.60px;top:623.81px;font-size:9.15px">0.808317673</div>
<div class="t r" style="right:214.60px;top:623.81px;font-size:9.15px">0.191682327</div>
<div class="t r" style="right:155.50px;top:623.81px;font-size:9.15px">20</div>
<div class="t r" style="right:80.70px;top:623.81px;font-size:9.15px">1754</div>
<div class="t r" style="right:5.20px;top:623.81px;font-size:9.15px">1496</div>
<div class="t r" style="right:711.60px;top:636.12px;font-size:9.15px">42</div>
<div class="t r" style="right:652.80px;top:636.12px;font-size:9.15px">1754</div>
<div class="t r" style="right:591.80px;top:636.12px;font-size:9.15px">1500</div>
<div class="t r" style="right:530.80px;top:636.12px;font-size:9.15px">1</div>
<div class="t r" style="right:472.20px;top:636.12px;font-size:9.15px">0</div>
<div class="t r" style="right:404.60px;top:636.12px;font-size:9.15px">24266.1009508</div>
<div class="t r" style="right:331.60px;top:636.12px;font-size:9.15px">5623.413251904</div>
<div class="t r" style="right:272.60px;top:636.12px;font-size:9.15px">0.811859998</div>
<div class="t r" style="right:214.60px;top:636.12px;font-size:9.15px">0.188140002</div>
<div class="t r" style="right:155.50px;top:636.12px;font-size:9.15px">20</div>
<div class="t r" style="right:80.70px;top:636.12px;font-size:9.15px">1758</div>
<div class="t r" style="right:5.20px;top:636.12px;font-size:9.15px">1496</div>
<div class="t r" style="right:711.60px;top:648.43px;font-size:9.15px">43</div>
<div class="t r" style="right:652.80px;top:648.43px;font-size:9.15px">1758</div>
<div class="t r" style="right:591.80px;top:648.43px;font-size:9.15px">1500</div>
<div class="t r" style="right:530.80px;top:648.43px;font-size:9.15px">1</div>
<div class="t r" style="right:472.20px;top:648.43px;font-size:9.15px">0</div>
<div class="t r" style="right:404.60px;top:648.43px;font-size:9.15px">24831.331053</div>
<div class="t r" style="right:331.60px;top:648.43px;font-size:9.15px">5623.413251904</div>
<div class="t r" style="right:272.60px;top:648.43px;font-size:9.15px">0.815351815</div>
<div class="t r" style="right:214.60px;top:648.43px;font-size:9.15px">0.184648185</div>
<div class="t r" style="right:155.50px;top:648.43px;font-size:9.15px">20</div>
<div class="t r" style="right:80.70px;top:648.43px;font-size:9.15px">1762</div>
<div class="t r" style="right:5.20px;top:648.43px;font-size:9.15px">1496</div>
<div class="t r" style="right:711.60px;top:660.74px;font-size:9.15px">44</div>
<div class="t r" style="right:652.80px;top:660.74px;font-size:9.15px">1762</div>
<div class="t r" style="right:591.80px;top:660.74px;font-size:9.15px">1500</div>
<div class="t r" style="right:530.80px;top:660.74px;font-size:9.15px">1</div>
<div class="t r" style="right:472.20px;top:660.74px;font-size:9.15px">0</div>
<div class="t r" style="right:404.60px;top:660.74px;font-size:9.15px">25409.7270555</div>
<div class="t r" style="right:331.60px;top:660.74px;font-size:9.15px">5623.413251904</div>
<div class="t r" style="right:272.60px;top:660.74px;font-size:9.15px">0.81879329</div>
<div class="t r" style="right:214.60px;top:660.74px;font-size:9.15px">0.18120671</div>
<div class="t r" style="right:155.50px;top:660.74px;font-size:9.15px">20</div>
<div class="t r" style="right:80.70px;top:660.74px;font-size:9.15px">1766</div>
<div class="t r" style="right:5.20px;top:660.74px;font-size:9.15px">1496</div>
<div class="t r" style="right:711.60px;top:673.05px;font-size:9.15px">45</div>
<div class="t r" style="right:652.80px;top:673.05px;font-size:9.15px">1766</div>
<div class="t r" style="right:591.80px;top:673.05px;font-size:9.15px">1500</div>
<div class="t r" style="right:530.80px;top:673.05px;font-size:9.15px">1</div>
<div class="t r" style="right:472.20px;top:673.05px;font-size:9.15px">0</div>
<div class="t r" style="right:404.60px;top:673.05px;font-size:9.15px">26001.5956317</div>
<div class="t r" style="right:331.60px;top:673.05px;font-size:9.15px">5623.413251904</div>
<div class="t r" style="right:272.60px;top:673.05px;font-size:9.15px">0.822184611</div>
<div class="t r" style="right:214.60px;top:673.05px;font-size:9.15px">0.177815389</div>
<div class="t r" style="right:155.50px;top:673.05px;font-size:9.15px">20</div>
<div class="t r" style="right:80.70px;top:673.05px;font-size:9.15px">1770</div>
<div class="t r" style="right:5.20px;top:673.05px;font-size:9.15px">1496</div>
<div class="t r" style="right:711.60px;top:685.36px;font-size:9.15px">46</div>
<div class="t r" style="right:652.80px;top:685.36px;font-size:9.15px">1770</div>
<div class="t r" style="right:591.80px;top:685.36px;font-size:9.15px">1500</div>
<div class="t r" style="right:530.80px;top:685.36px;font-size:9.15px">1</div>
<div class="t r" style="right:472.20px;top:685.36px;font-size:9.15px">0</div>
<div class="t r" style="right:404.60px;top:685.36px;font-size:9.15px">26607.250598</div>
<div class="t r" style="right:331.60px;top:685.36px;font-size:9.15px">5623.413251904</div>
<div class="t r" style="right:272.60px;top:685.36px;font-size:9.15px">0.825525987</div>
<div class="t r" style="right:214.60px;top:685.36px;font-size:9.15px">0.174474013</div>
<div class="t r" style="right:155.50px;top:685.36px;font-size:9.15px">20</div>
<div class="t r" style="right:80.70px;top:685.36px;font-size:9.15px">1773</div>
<div class="t r" style="right:5.20px;top:685.36px;font-size:9.15px">1497</div>
<div class="t r" style="right:711.60px;top:697.67px;font-size:9.15px">47</div>
<div class="t r" style="right:652.80px;top:697.67px;font-size:9.15px">1773</div>
<div class="t r" style="right:591.80px;top:697.67px;font-size:9.15px">1500</div>
<div class="t r" style="right:530.80px;top:697.67px;font-size:9.15px">1</div>
<div class="t r" style="right:472.20px;top:697.67px;font-size:9.15px">0</div>
<div class="t r" style="right:404.60px;top:697.67px;font-size:9.15px">27070.7320392</div>
<div class="t r" style="right:331.60px;top:697.67px;font-size:9.15px">5623.413251904</div>
<div class="t r" style="right:272.60px;top:697.67px;font-size:9.15px">0.82799938</div>
<div class="t r" style="right:214.60px;top:697.67px;font-size:9.15px">0.17200062</div>
<div class="t r" style="right:155.50px;top:697.67px;font-size:9.15px">20</div>
<div class="t r" style="right:80.70px;top:697.67px;font-size:9.15px">1776</div>
<div class="t r" style="right:5.20px;top:697.67px;font-size:9.15px">1497</div>
<div class="t r" style="right:711.60px;top:709.98px;font-size:9.15px">48</div>
<div class="t r" style="right:652.80px;top:709.98px;font-size:9.15px">1776</div>
<div class="t r" style="right:591.80px;top:709.98px;font-size:9.15px">1500</div>
<div class="t r" style="right:530.80px;top:709.98px;font-size:9.15px">1</div>
<div class="t r" style="right:472.20px;top:709.98px;font-size:9.15px">0</div>
<div class="t r" style="right:404.60px;top:709.98px;font-size:9.15px">27542.2870334</div>
<div class="t r" style="right:331.60px;top:709.98px;font-size:9.15px">5623.413251904</div>
<div class="t r" style="right:272.60px;top:709.98px;font-size:9.15px">0.830444911</div>
<div class="t r" style="right:214.60px;top:709.98px;font-size:9.15px">0.169555089</div>
<div class="t r" style="right:155.50px;top:709.98px;font-size:9.15px">20</div>
<div class="t r" style="right:80.70px;top:709.98px;font-size:9.15px">1779</div>
<div class="t r" style="right:5.20px;top:709.98px;font-size:9.15px">1497</div>
<svg class="a" style="left:0;top:0" width="788" height="750"><defs><linearGradient id="nb" x1="0" y1="0" x2="0" y2="1"><stop offset="0" stop-color="#fcfcfc"/><stop offset="1" stop-color="#dcdcdc"/></linearGradient><linearGradient id="th" x1="0" y1="0" x2="0" y2="1"><stop offset="0" stop-color="#f6f6f6"/><stop offset="0.45" stop-color="#e6e6e6"/><stop offset="0.55" stop-color="#d4d4d4"/><stop offset="1" stop-color="#cacaca"/></linearGradient></defs><rect x="1" y="731.5" width="196" height="12" fill="#f0f0f0"/><rect x="197" y="731.5" width="591" height="12" fill="#e8e8e8"/><rect x="0" y="743.5" width="788" height="6.5" fill="#f0f0f0"/><line x1="91" x2="193" y1="731.6" y2="731.6" stroke="#8a8a8a" stroke-width="1"/><line x1="197" x2="788" y1="731.6" y2="731.6" stroke="#c8c8c8" stroke-width="1"/><rect x="2.75" y="732.9" width="9.40" height="9.3" rx="1.6" fill="url(#nb)" stroke="#8a8a8a" stroke-width="1"/><rect x="14.95" y="732.9" width="9.40" height="9.3" rx="1.6" fill="url(#nb)" stroke="#8a8a8a" stroke-width="1"/><rect x="27.45" y="732.9" width="9.40" height="9.3" rx="1.6" fill="url(#nb)" stroke="#8a8a8a" stroke-width="1"/><rect x="39.65" y="732.9" width="9.40" height="9.3" rx="1.6" fill="url(#nb)" stroke="#8a8a8a" stroke-width="1"/><path d="M5.3 735.2h1.2v4.8h-1.2z M6.6 737.6l3.6-2.6v5.2z" fill="#111"/><path d="M17.8 737.6l3.6-2.6v5.2z" fill="#111"/><path d="M33.8 737.6l-3.6-2.6v5.2z" fill="#111"/><path d="M46.4 735.2h-1.2v4.8h1.2z M45.1 737.6l-3.6-2.6v5.2z" fill="#111"/><path d="M88 742.4L93 731.6H128L123 742.4Z" fill="#e6e6e6" stroke="#8a8a8a" stroke-width="0.9"/><path d="M123 742.4L128 731.6H165.5L160.5 742.4Z" fill="#e6e6e6" stroke="#8a8a8a" stroke-width="0.9"/><path d="M51 731.6L56.1 742.4H87.4L92.4 731.6" fill="#fff" stroke="#6a6a6a" stroke-width="0.9"/><rect x="51.6" y="730.8" width="40.2" height="1.4" fill="#fff"/><path d="M192.8 731.6V743.2H196.3V731.6" fill="#f4f4f4" stroke="#7a7a7a" stroke-width="0.9"/><path d="M201.6 737.4l3-2.2v4.4z" fill="#333"/><rect x="209.8" y="732.8" width="447.3" height="9.4" rx="2" fill="url(#th)" stroke="#a4a4a4" stroke-width="0.8"/><path d="M430.6 734.8v4.4M432.4 734.8v4.4M434.2 734.8v4.4M436 734.8v4.4" stroke="#444" stroke-width="0.9"/><line x1="772.3" x2="772.3" y1="746.5" y2="750" stroke="#7a7a7a" stroke-width="0.9"/></svg>
<div class="t" style="left:57px;top:732.2px;font-size:8.9px;font-weight:bold;color:#111;transform:scaleY(1.05)">Sheet1</div>
<div class="t" style="left:94.8px;top:732.2px;font-size:8.45px;color:#222;transform:scaleY(1.05)">Sheet2</div>
<div class="t" style="left:129.8px;top:732.2px;font-size:8.45px;color:#222;transform:scaleY(1.05)">Sheet3</div>
</body></html>
